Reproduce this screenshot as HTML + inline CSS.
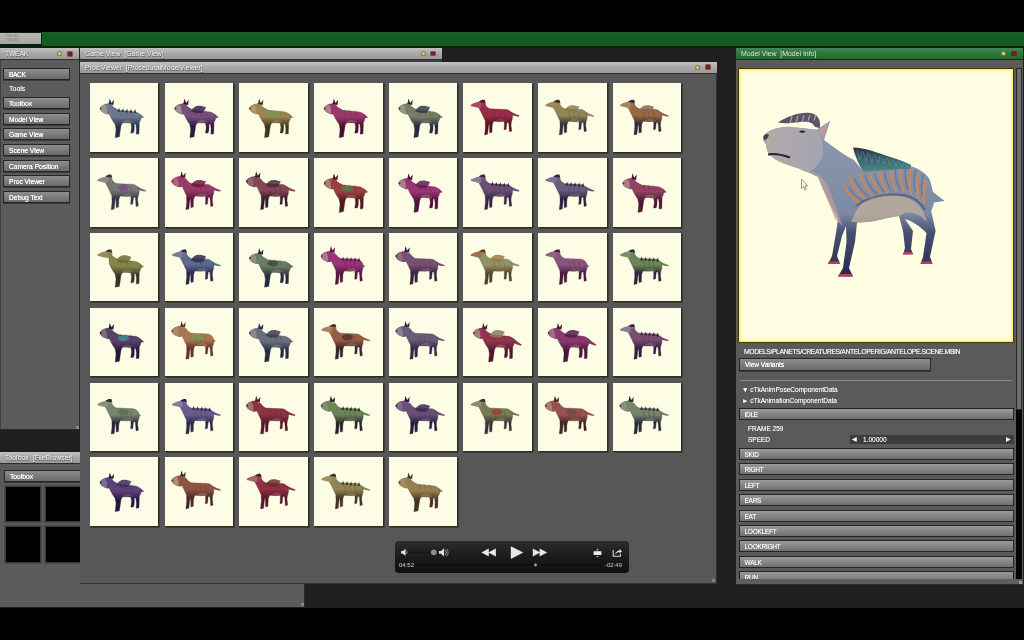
<!DOCTYPE html><html><head><meta charset="utf-8"><style>
*{margin:0;padding:0;box-sizing:border-box}
.hdr,.btn,.lbl,.bar,.tx{will-change:transform}
html,body{width:1024px;height:640px;overflow:hidden;background:#000}
body{position:relative;font-family:"Liberation Sans",sans-serif;}
.a{position:absolute}
.hdr{position:absolute;box-shadow:0 1px 0 #2e2e2e;background:linear-gradient(#c2c2c2,#a8a8a8 50%,#999);color:#fff;font-size:6.9px;line-height:11px;padding-left:5px;white-space:pre;overflow:hidden;text-shadow:0.4px 0.5px 0.6px #505050,0 0 1px #707070}
.panel{position:absolute;background:#5a5a5a}
.btn{position:absolute;background:linear-gradient(#8e8e8e,#6a6a6a);border:1px solid #262626;box-shadow:0 1px 0 #3a3a3a;color:#fff;font-size:6.7px;line-height:11.5px;padding-left:5px;text-shadow:0 0 0.6px #fff;white-space:nowrap;overflow:hidden}
.lbl{position:absolute;color:#fafafa;text-shadow:0 0 0.5px rgba(255,255,255,0.6);font-size:7px;line-height:9px;white-space:nowrap}
.th{position:absolute;width:68.6px;height:68.6px;background:#fdfde6;box-shadow:1px 1px 0 0.6px #2e2e28}
.dot{position:absolute;width:5px;height:5px;margin:-0.8px 0 0 0;border-radius:50%;background:radial-gradient(circle at 50% 50%,#f8f0a0,#a89040 50%,#5a4a22 85%);}
.sq{position:absolute;width:3.8px;height:3.8px;margin:0 0 0 0.2px;background:#901616;box-shadow:0 0 0 0.5px #4a0c0c}
.bar{position:absolute;left:738.5px;width:275px;height:12.3px;background:linear-gradient(#9a9a9a,#707070);border:1px solid #242424;color:#fff;font-size:6.5px;line-height:11px;padding-left:4.5px;text-shadow:0 0 0.5px rgba(255,255,255,0.6);letter-spacing:-0.25px;white-space:nowrap;overflow:hidden}
</style></head><body>
<div class="a" style="left:0;top:32px;width:1024px;height:575.5px;background:#1f1f1f"></div>
<div class="a" style="left:0;top:32px;width:1024px;height:15.5px;background:#0b1f0f"></div>
<div class="a" style="left:42.2px;top:31.9px;width:982px;height:14px;background:linear-gradient(#175f24,#145a20)"></div>
<div class="a" style="left:0.3px;top:32.7px;width:40.9px;height:11.4px;background:linear-gradient(#b8b8b8,#a6a3a3)"></div>
<div class="a tx" style="left:5px;top:34px;font-size:4px;line-height:4.2px;color:#8a8a8a">TWEAK<br>TWEAK</div>
<div class="panel" style="left:0;top:48px;width:78.5px;height:382.3px;background:#5b5b5b;border-bottom:1px solid #2a2a2a;border-left:1px solid #404040"></div>
<div class="hdr" style="left:0;top:48px;width:78.5px;height:10.7px;letter-spacing:-0.3px">TWEAK</div>
<div class="a" style="left:78.5px;top:48px;width:1.5px;height:382px;background:#262626"></div>
<div class="dot" style="left:57px;top:52px"></div><div class="sq" style="left:68px;top:52px"></div>
<div class="a" style="left:75.5px;top:426px;width:3px;height:3px;background:#8a8a8a"></div>
<div class="btn" style="left:3.2px;top:68px;width:66.5px;height:12.2px;letter-spacing:-0.4px">BACK</div>
<div class="lbl" style="left:8.5px;top:84px">Tools</div>
<div class="btn" style="left:3.2px;top:97.30px;width:66.5px;height:12.4px">Toolbox</div>
<div class="btn" style="left:3.2px;top:112.85px;width:66.5px;height:12.4px">Model View</div>
<div class="btn" style="left:3.2px;top:128.40px;width:66.5px;height:12.4px">Game View</div>
<div class="btn" style="left:3.2px;top:143.95px;width:66.5px;height:12.4px">Scene View</div>
<div class="btn" style="left:3.2px;top:159.50px;width:66.5px;height:12.4px">Camera Position</div>
<div class="btn" style="left:3.2px;top:175.05px;width:66.5px;height:12.4px">Proc Viewer</div>
<div class="btn" style="left:3.2px;top:190.60px;width:66.5px;height:12.4px">Debug Text</div>
<div class="panel" style="left:0;top:452.25px;width:305px;height:155px;background:#5b5b5b;border-right:1.5px solid #2a2a2a"></div>
<div class="hdr" style="left:0;top:452.25px;width:305px;height:10.9px">Toolbox  [FileBrowser]</div>
<div class="btn" style="left:3.75px;top:470px;width:300px;height:11.5px">Toolbox</div>
<div class="a" style="left:4.50px;top:485.60px;width:36.5px;height:36.5px;background:#000;border:1px solid #3c3c3c;box-shadow:0 0 0 1px #4a4a4a"></div>
<div class="a" style="left:45.30px;top:485.60px;width:36.5px;height:36.5px;background:#000;border:1px solid #3c3c3c;box-shadow:0 0 0 1px #4a4a4a"></div>
<div class="a" style="left:4.50px;top:526.10px;width:36.5px;height:36.5px;background:#000;border:1px solid #3c3c3c;box-shadow:0 0 0 1px #4a4a4a"></div>
<div class="a" style="left:45.30px;top:526.10px;width:36.5px;height:36.5px;background:#000;border:1px solid #3c3c3c;box-shadow:0 0 0 1px #4a4a4a"></div>
<div class="a" style="left:301px;top:603px;width:3px;height:3px;background:#888"></div>
<div class="panel" style="left:80px;top:48px;width:362px;height:14px;background:#3e3e3e"></div>
<div class="hdr" style="left:80px;top:47.8px;width:362px;height:11.2px">Game View  [Game View]</div>
<div class="dot" style="left:420.5px;top:51.7px"></div><div class="sq" style="left:431px;top:51.7px"></div>
<div class="panel" style="left:80px;top:62px;width:636.5px;height:521.75px;background:#575757;border-right:1px solid #333;border-bottom:1px solid #333"></div>
<div class="hdr" style="left:80px;top:62px;width:636.5px;height:10.7px">Proc Viewer  [ProceduralModelViewer]</div>
<div class="dot" style="left:695.2px;top:65.4px"></div><div class="sq" style="left:706px;top:65.4px"></div>
<div class="a" style="left:712px;top:579px;width:3px;height:3px;background:#888"></div>
<div class="th" style="left:89.90px;top:83.30px"></div>
<div class="th" style="left:164.58px;top:83.30px"></div>
<div class="th" style="left:239.26px;top:83.30px"></div>
<div class="th" style="left:313.94px;top:83.30px"></div>
<div class="th" style="left:388.62px;top:83.30px"></div>
<div class="th" style="left:463.30px;top:83.30px"></div>
<div class="th" style="left:537.98px;top:83.30px"></div>
<div class="th" style="left:612.66px;top:83.30px"></div>
<div class="th" style="left:89.90px;top:158.10px"></div>
<div class="th" style="left:164.58px;top:158.10px"></div>
<div class="th" style="left:239.26px;top:158.10px"></div>
<div class="th" style="left:313.94px;top:158.10px"></div>
<div class="th" style="left:388.62px;top:158.10px"></div>
<div class="th" style="left:463.30px;top:158.10px"></div>
<div class="th" style="left:537.98px;top:158.10px"></div>
<div class="th" style="left:612.66px;top:158.10px"></div>
<div class="th" style="left:89.90px;top:232.90px"></div>
<div class="th" style="left:164.58px;top:232.90px"></div>
<div class="th" style="left:239.26px;top:232.90px"></div>
<div class="th" style="left:313.94px;top:232.90px"></div>
<div class="th" style="left:388.62px;top:232.90px"></div>
<div class="th" style="left:463.30px;top:232.90px"></div>
<div class="th" style="left:537.98px;top:232.90px"></div>
<div class="th" style="left:612.66px;top:232.90px"></div>
<div class="th" style="left:89.90px;top:307.70px"></div>
<div class="th" style="left:164.58px;top:307.70px"></div>
<div class="th" style="left:239.26px;top:307.70px"></div>
<div class="th" style="left:313.94px;top:307.70px"></div>
<div class="th" style="left:388.62px;top:307.70px"></div>
<div class="th" style="left:463.30px;top:307.70px"></div>
<div class="th" style="left:537.98px;top:307.70px"></div>
<div class="th" style="left:612.66px;top:307.70px"></div>
<div class="th" style="left:89.90px;top:382.50px"></div>
<div class="th" style="left:164.58px;top:382.50px"></div>
<div class="th" style="left:239.26px;top:382.50px"></div>
<div class="th" style="left:313.94px;top:382.50px"></div>
<div class="th" style="left:388.62px;top:382.50px"></div>
<div class="th" style="left:463.30px;top:382.50px"></div>
<div class="th" style="left:537.98px;top:382.50px"></div>
<div class="th" style="left:612.66px;top:382.50px"></div>
<div class="th" style="left:89.90px;top:457.30px"></div>
<div class="th" style="left:164.58px;top:457.30px"></div>
<div class="th" style="left:239.26px;top:457.30px"></div>
<div class="th" style="left:313.94px;top:457.30px"></div>
<div class="th" style="left:388.62px;top:457.30px"></div>
<svg class="a" style="left:0;top:0" width="1024" height="640" viewBox="0 0 1024 640"><g transform="translate(90.40,83.30)"><defs><linearGradient id="g1" x1="0" y1="20" x2="0" y2="52" gradientUnits="userSpaceOnUse"><stop offset="0" stop-color="#6b788e"/><stop offset="0.42" stop-color="#6b788e"/><stop offset="0.72" stop-color="#272e4d"/><stop offset="1" stop-color="#272e4d"/></linearGradient></defs><path d="M49,30 L53.8,34.2 L50.2,35 Z" fill="#6b788e"/><path d="M18,20.5 C21,22 24,25 28.5,27 L45,28.6 C48.5,29.3 50.5,31.3 50.6,34 C50.6,36 50,37.5 49,39 L48.8,44 L48.6,50.5 L45.8,51 L46,45 L45.4,40.8 L44,40.8 L43.8,47 L43,49.8 L40.4,49.8 L41.2,44 L40.4,39.8 L33.5,39.4 C31.5,39.8 30.8,41 30.4,44 L29,53.5 L24.8,54.4 L25.6,46 L24.6,40.8 C22.5,38 20.5,35 19,31 Z" fill="url(#g1)" stroke="#272e4d" stroke-width="0.7" stroke-opacity="0.45"/><path d="M30.0,26.5 l1.5,6" stroke="#272e4d" stroke-width="1.3" opacity="0.18"/><path d="M35.0,26.5 l1.5,6" stroke="#272e4d" stroke-width="1.3" opacity="0.18"/><path d="M40.0,26.5 l1.5,6" stroke="#272e4d" stroke-width="1.3" opacity="0.18"/><path d="M27,28.3 L28.8,24.5 L29.6,28.5 Z" fill="#272e4d"/><path d="M31,28.6 L32.8,24.8 L33.6,28.8 Z" fill="#272e4d"/><path d="M35,28.900000000000002 L36.8,25.1 L37.6,29.1 Z" fill="#272e4d"/><path d="M39,29.2 L40.8,25.4 L41.6,29.4 Z" fill="#272e4d"/><path d="M43,29.5 L44.8,25.7 L45.6,29.7 Z" fill="#272e4d"/><path d="M31,39.3 C34,35.8 40,35.8 43,39.3 Z" fill="#a29785" opacity="0.45"/><g transform=""><path d="M9.5,25 C10,23 12.5,21.2 15.5,20.5 L19,20 C21.5,20.5 23,23 23,26 C22.5,29 20.5,31 18,31.2 C15.5,31 13,30 11.5,28.5 C10.2,27.5 9.5,26.3 9.5,25 Z" fill="#6b788e"/><path d="M9.5,25 C10,23 12.5,21.5 15,21.5 C16.5,24 17,27 16.5,30.6 C14.5,30.4 12.5,29.4 11.5,28.5 C10.2,27.5 9.5,26.3 9.5,25 Z" fill="#a29785"/><path d="M18.2,20.8 L19.4,15.2 L21,19.6 L23.6,16.4 L23,21.8 Z" fill="#272e4d"/><circle cx="10.3" cy="25.2" r="1" fill="#272e4d" opacity="0.8"/></g></g><g transform="translate(165.08,83.30)"><defs><linearGradient id="g2" x1="0" y1="20" x2="0" y2="52" gradientUnits="userSpaceOnUse"><stop offset="0" stop-color="#784f7a"/><stop offset="0.42" stop-color="#784f7a"/><stop offset="0.72" stop-color="#34173d"/><stop offset="1" stop-color="#34173d"/></linearGradient></defs><path d="M49,30 L53.8,34.2 L50.2,35 Z" fill="#784f7a"/><path d="M18,20.5 C21,22 24,25 28.5,27 L45,28.6 C48.5,29.3 50.5,31.3 50.6,34 C50.6,36 50,37.5 49,39 L48.8,44 L48.6,50.5 L45.8,51 L46,45 L45.4,40.8 L44,40.8 L43.8,47 L43,49.8 L40.4,49.8 L41.2,44 L40.4,39.8 L33.5,39.4 C31.5,39.8 30.8,41 30.4,44 L29,53.5 L24.8,54.4 L25.6,46 L24.6,40.8 C22.5,38 20.5,35 19,31 Z" fill="url(#g2)" stroke="#34173d" stroke-width="0.7" stroke-opacity="0.45"/><path d="M30.0,26.5 l1.5,6" stroke="#34173d" stroke-width="1.3" opacity="0.18"/><path d="M35.0,26.5 l1.5,6" stroke="#34173d" stroke-width="1.3" opacity="0.18"/><path d="M40.0,26.5 l1.5,6" stroke="#34173d" stroke-width="1.3" opacity="0.18"/><path d="M26,28 C28,22 34,21 41,24 L38,29.5 C34,30 30,30 26,28 Z" fill="#3a2048" opacity="0.85"/><path d="M31,39.3 C34,35.8 40,35.8 43,39.3 Z" fill="#9e9090" opacity="0.45"/><g transform=""><path d="M9.5,25 C10,23 12.5,21.2 15.5,20.5 L19,20 C21.5,20.5 23,23 23,26 C22.5,29 20.5,31 18,31.2 C15.5,31 13,30 11.5,28.5 C10.2,27.5 9.5,26.3 9.5,25 Z" fill="#784f7a"/><path d="M9.5,25 C10,23 12.5,21.5 15,21.5 C16.5,24 17,27 16.5,30.6 C14.5,30.4 12.5,29.4 11.5,28.5 C10.2,27.5 9.5,26.3 9.5,25 Z" fill="#9e9090"/><path d="M18.2,20.8 L19.4,15.2 L21,19.6 L23.6,16.4 L23,21.8 Z" fill="#34173d"/><circle cx="10.3" cy="25.2" r="1" fill="#34173d" opacity="0.8"/></g></g><g transform="translate(239.76,83.30)"><defs><linearGradient id="g3" x1="0" y1="20" x2="0" y2="52" gradientUnits="userSpaceOnUse"><stop offset="0" stop-color="#998654"/><stop offset="0.42" stop-color="#998654"/><stop offset="0.72" stop-color="#42341e"/><stop offset="1" stop-color="#42341e"/></linearGradient></defs><path d="M49,30 L53.8,34.2 L50.2,35 Z" fill="#998654"/><path d="M18,20.5 C21,22 24,25 28.5,27 L45,28.6 C48.5,29.3 50.5,31.3 50.6,34 C50.6,36 50,37.5 49,39 L48.8,44 L48.6,50.5 L45.8,51 L46,45 L45.4,40.8 L44,40.8 L43.8,47 L43,49.8 L40.4,49.8 L41.2,44 L40.4,39.8 L33.5,39.4 C31.5,39.8 30.8,41 30.4,44 L29,53.5 L24.8,54.4 L25.6,46 L24.6,40.8 C22.5,38 20.5,35 19,31 Z" fill="url(#g3)" stroke="#42341e" stroke-width="0.7" stroke-opacity="0.45"/><path d="M30.0,26.5 l1.5,6" stroke="#42341e" stroke-width="1.3" opacity="0.18"/><path d="M35.0,26.5 l1.5,6" stroke="#42341e" stroke-width="1.3" opacity="0.18"/><path d="M40.0,26.5 l1.5,6" stroke="#42341e" stroke-width="1.3" opacity="0.18"/><ellipse cx="33" cy="30.5" rx="5.5" ry="3" fill="#7a9a50" opacity="0.75"/><path d="M31,39.3 C34,35.8 40,35.8 43,39.3 Z" fill="#ac976c" opacity="0.45"/><g transform=""><path d="M9.5,25 C10,23 12.5,21.2 15.5,20.5 L19,20 C21.5,20.5 23,23 23,26 C22.5,29 20.5,31 18,31.2 C15.5,31 13,30 11.5,28.5 C10.2,27.5 9.5,26.3 9.5,25 Z" fill="#998654"/><path d="M9.5,25 C10,23 12.5,21.5 15,21.5 C16.5,24 17,27 16.5,30.6 C14.5,30.4 12.5,29.4 11.5,28.5 C10.2,27.5 9.5,26.3 9.5,25 Z" fill="#ac976c"/><path d="M18.2,20.8 L19.4,15.2 L21,19.6 L23.6,16.4 L23,21.8 Z" fill="#42341e"/><circle cx="10.3" cy="25.2" r="1" fill="#42341e" opacity="0.8"/></g></g><g transform="translate(314.44,83.30)"><defs><linearGradient id="g4" x1="0" y1="20" x2="0" y2="52" gradientUnits="userSpaceOnUse"><stop offset="0" stop-color="#99386a"/><stop offset="0.42" stop-color="#99386a"/><stop offset="0.72" stop-color="#49102d"/><stop offset="1" stop-color="#49102d"/></linearGradient></defs><path d="M49,30 L53.8,34.2 L50.2,35 Z" fill="#99386a"/><path d="M18,20.5 C21,22 24,25 28.5,27 L45,28.6 C48.5,29.3 50.5,31.3 50.6,34 C50.6,36 50,37.5 49,39 L48.8,44 L48.6,50.5 L45.8,51 L46,45 L45.4,40.8 L44,40.8 L43.8,47 L43,49.8 L40.4,49.8 L41.2,44 L40.4,39.8 L33.5,39.4 C31.5,39.8 30.8,41 30.4,44 L29,53.5 L24.8,54.4 L25.6,46 L24.6,40.8 C22.5,38 20.5,35 19,31 Z" fill="url(#g4)" stroke="#49102d" stroke-width="0.7" stroke-opacity="0.45"/><path d="M30.0,26.5 l1.5,6" stroke="#49102d" stroke-width="1.3" opacity="0.18"/><path d="M35.0,26.5 l1.5,6" stroke="#49102d" stroke-width="1.3" opacity="0.18"/><path d="M40.0,26.5 l1.5,6" stroke="#49102d" stroke-width="1.3" opacity="0.18"/><path d="M31,39.3 C34,35.8 40,35.8 43,39.3 Z" fill="#ac818a" opacity="0.45"/><g transform=""><path d="M9.5,25 C10,23 12.5,21.2 15.5,20.5 L19,20 C21.5,20.5 23,23 23,26 C22.5,29 20.5,31 18,31.2 C15.5,31 13,30 11.5,28.5 C10.2,27.5 9.5,26.3 9.5,25 Z" fill="#99386a"/><path d="M9.5,25 C10,23 12.5,21.5 15,21.5 C16.5,24 17,27 16.5,30.6 C14.5,30.4 12.5,29.4 11.5,28.5 C10.2,27.5 9.5,26.3 9.5,25 Z" fill="#ac818a"/><path d="M18.2,20.8 L19.4,15.2 L21,19.6 L23.6,16.4 L23,21.8 Z" fill="#49102d"/><circle cx="10.3" cy="25.2" r="1" fill="#49102d" opacity="0.8"/></g></g><g transform="translate(389.12,83.30)"><defs><linearGradient id="g5" x1="0" y1="20" x2="0" y2="52" gradientUnits="userSpaceOnUse"><stop offset="0" stop-color="#767d63"/><stop offset="0.42" stop-color="#767d63"/><stop offset="0.72" stop-color="#272b3d"/><stop offset="1" stop-color="#272b3d"/></linearGradient></defs><path d="M49,30 L53.8,34.2 L50.2,35 Z" fill="#767d63"/><path d="M18,20.5 C21,22 24,25 28.5,27 L45,28.6 C48.5,29.3 50.5,31.3 50.6,34 C50.6,36 50,37.5 49,39 L48.8,44 L48.6,50.5 L45.8,51 L46,45 L45.4,40.8 L44,40.8 L43.8,47 L43,49.8 L40.4,49.8 L41.2,44 L40.4,39.8 L33.5,39.4 C31.5,39.8 30.8,41 30.4,44 L29,53.5 L24.8,54.4 L25.6,46 L24.6,40.8 C22.5,38 20.5,35 19,31 Z" fill="url(#g5)" stroke="#272b3d" stroke-width="0.7" stroke-opacity="0.45"/><path d="M30.0,26.5 l1.5,6" stroke="#272b3d" stroke-width="1.3" opacity="0.18"/><path d="M35.0,26.5 l1.5,6" stroke="#272b3d" stroke-width="1.3" opacity="0.18"/><path d="M40.0,26.5 l1.5,6" stroke="#272b3d" stroke-width="1.3" opacity="0.18"/><path d="M26,28 C28,22 34,21 41,24 L38,29.5 C34,30 30,30 26,28 Z" fill="#303848" opacity="0.85"/><path d="M31,39.3 C34,35.8 40,35.8 43,39.3 Z" fill="#979781" opacity="0.45"/><g transform=""><path d="M9.5,25 C10,23 12.5,21.2 15.5,20.5 L19,20 C21.5,20.5 23,23 23,26 C22.5,29 20.5,31 18,31.2 C15.5,31 13,30 11.5,28.5 C10.2,27.5 9.5,26.3 9.5,25 Z" fill="#767d63"/><path d="M9.5,25 C10,23 12.5,21.5 15,21.5 C16.5,24 17,27 16.5,30.6 C14.5,30.4 12.5,29.4 11.5,28.5 C10.2,27.5 9.5,26.3 9.5,25 Z" fill="#979781"/><path d="M18.2,20.8 L19.4,15.2 L21,19.6 L23.6,16.4 L23,21.8 Z" fill="#272b3d"/><circle cx="10.3" cy="25.2" r="1" fill="#272b3d" opacity="0.8"/></g></g><g transform="translate(463.80,83.30)"><defs><linearGradient id="g6" x1="0" y1="20" x2="0" y2="49" gradientUnits="userSpaceOnUse"><stop offset="0" stop-color="#992c48"/><stop offset="0.42" stop-color="#992c48"/><stop offset="0.72" stop-color="#521220"/><stop offset="1" stop-color="#521220"/></linearGradient></defs><path d="M46,28 C49,29.5 52,31 55.6,32.2 L55.2,33.4 C51.5,33 48.5,32 46.5,31.8 Z" fill="#992c48"/><path d="M20,20 C22,22 23.5,24.5 26,25.5 L43,26.3 C46,26.8 48,29 48.6,32 C49,34.5 48.5,36.5 47.6,38.5 L47.2,42 L48,47.8 L45.6,48.4 L45.2,42.5 L44.8,39.2 L43.2,39.2 L42.8,42 L42.4,46 L40.2,46.4 L40.6,42 L40.4,38.2 C37,38.4 33,38.4 30,38 C29,39.5 28.5,41 28.4,43 L28.2,49 L25.8,49.6 L25.6,43.5 L25.4,39.6 L24.6,43.5 L23.8,51 L20.8,51.6 L21.6,44 L21.4,37.5 C19.8,34.5 17.5,29 15,24.5 Z" fill="url(#g6)" stroke="#521220" stroke-width="0.7" stroke-opacity="0.45"/><path d="M30.0,28.5 l1.5,6" stroke="#521220" stroke-width="1.3" opacity="0.18"/><path d="M35.0,28.5 l1.5,6" stroke="#521220" stroke-width="1.3" opacity="0.18"/><path d="M40.0,28.5 l1.5,6" stroke="#521220" stroke-width="1.3" opacity="0.18"/><path d="M31,38 C34,34.5 40,34.5 43,38 Z" fill="#ac4864" opacity="0.45"/><path d="M7,21.5 C9,20 12.5,18.8 16,18.3 L20.5,17.2 C22,18.5 22.5,20.5 21.5,23.5 C19.5,24.5 17,25 15,24.8 C12.5,24.2 10,23.6 7,22.8 Z" fill="#ac4864"/><path d="M15,18.4 C17,16.8 19,16.2 21,16.6 L21.6,19.6 C19.5,19.2 17,19 15,18.4 Z" fill="#521220"/><path d="M18,19.5 C21,20 22.5,21.5 21.5,24 C20,24.6 18.5,24.8 17,24.8 Z" fill="#992c48" opacity="0.85"/></g><g transform="translate(538.48,83.30)"><defs><linearGradient id="g7" x1="0" y1="20" x2="0" y2="49" gradientUnits="userSpaceOnUse"><stop offset="0" stop-color="#928654"/><stop offset="0.42" stop-color="#928654"/><stop offset="0.72" stop-color="#362e39"/><stop offset="1" stop-color="#362e39"/></linearGradient></defs><path d="M46,28 C49,29.5 52,31 55.6,32.2 L55.2,33.4 C51.5,33 48.5,32 46.5,31.8 Z" fill="#928654"/><path d="M20,20 C22,22 23.5,24.5 26,25.5 L43,26.3 C46,26.8 48,29 48.6,32 C49,34.5 48.5,36.5 47.6,38.5 L47.2,42 L48,47.8 L45.6,48.4 L45.2,42.5 L44.8,39.2 L43.2,39.2 L42.8,42 L42.4,46 L40.2,46.4 L40.6,42 L40.4,38.2 C37,38.4 33,38.4 30,38 C29,39.5 28.5,41 28.4,43 L28.2,49 L25.8,49.6 L25.6,43.5 L25.4,39.6 L24.6,43.5 L23.8,51 L20.8,51.6 L21.6,44 L21.4,37.5 C19.8,34.5 17.5,29 15,24.5 Z" fill="url(#g7)" stroke="#362e39" stroke-width="0.7" stroke-opacity="0.45"/><path d="M30.0,28.5 l1.5,6" stroke="#362e39" stroke-width="1.3" opacity="0.18"/><path d="M35.0,28.5 l1.5,6" stroke="#362e39" stroke-width="1.3" opacity="0.18"/><path d="M40.0,28.5 l1.5,6" stroke="#362e39" stroke-width="1.3" opacity="0.18"/><path d="M26,27.5 C28,21.5 34,20.5 41,23.5 L38,29.0 C34,29.5 30,29.5 26,27.5 Z" fill="#8a7a50" opacity="0.85"/><path d="M31,38 C34,34.5 40,34.5 43,38 Z" fill="#97885d" opacity="0.45"/><path d="M7,21.5 C9,20 12.5,18.8 16,18.3 L20.5,17.2 C22,18.5 22.5,20.5 21.5,23.5 C19.5,24.5 17,25 15,24.8 C12.5,24.2 10,23.6 7,22.8 Z" fill="#97885d"/><path d="M15,18.4 C17,16.8 19,16.2 21,16.6 L21.6,19.6 C19.5,19.2 17,19 15,18.4 Z" fill="#362e39"/><path d="M18,19.5 C21,20 22.5,21.5 21.5,24 C20,24.6 18.5,24.8 17,24.8 Z" fill="#928654" opacity="0.85"/></g><g transform="translate(613.16,83.30)"><defs><linearGradient id="g8" x1="0" y1="20" x2="0" y2="49" gradientUnits="userSpaceOnUse"><stop offset="0" stop-color="#996841"/><stop offset="0.42" stop-color="#996841"/><stop offset="0.72" stop-color="#342534"/><stop offset="1" stop-color="#342534"/></linearGradient></defs><path d="M46,28 C49,29.5 52,31 55.6,32.2 L55.2,33.4 C51.5,33 48.5,32 46.5,31.8 Z" fill="#996841"/><path d="M20,20 C22,22 23.5,24.5 26,25.5 L43,26.3 C46,26.8 48,29 48.6,32 C49,34.5 48.5,36.5 47.6,38.5 L47.2,42 L48,47.8 L45.6,48.4 L45.2,42.5 L44.8,39.2 L43.2,39.2 L42.8,42 L42.4,46 L40.2,46.4 L40.6,42 L40.4,38.2 C37,38.4 33,38.4 30,38 C29,39.5 28.5,41 28.4,43 L28.2,49 L25.8,49.6 L25.6,43.5 L25.4,39.6 L24.6,43.5 L23.8,51 L20.8,51.6 L21.6,44 L21.4,37.5 C19.8,34.5 17.5,29 15,24.5 Z" fill="url(#g8)" stroke="#342534" stroke-width="0.7" stroke-opacity="0.45"/><path d="M30.0,28.5 l1.5,6" stroke="#342534" stroke-width="1.3" opacity="0.18"/><path d="M35.0,28.5 l1.5,6" stroke="#342534" stroke-width="1.3" opacity="0.18"/><path d="M40.0,28.5 l1.5,6" stroke="#342534" stroke-width="1.3" opacity="0.18"/><path d="M26,27.5 C28,21.5 34,20.5 41,23.5 L38,29.0 C34,29.5 30,29.5 26,27.5 Z" fill="#8a6a50" opacity="0.85"/><path d="M31,38 C34,34.5 40,34.5 43,38 Z" fill="#a5815f" opacity="0.45"/><path d="M7,21.5 C9,20 12.5,18.8 16,18.3 L20.5,17.2 C22,18.5 22.5,20.5 21.5,23.5 C19.5,24.5 17,25 15,24.8 C12.5,24.2 10,23.6 7,22.8 Z" fill="#a5815f"/><path d="M15,18.4 C17,16.8 19,16.2 21,16.6 L21.6,19.6 C19.5,19.2 17,19 15,18.4 Z" fill="#342534"/><path d="M18,19.5 C21,20 22.5,21.5 21.5,24 C20,24.6 18.5,24.8 17,24.8 Z" fill="#996841" opacity="0.85"/></g><g transform="translate(90.40,158.10)"><defs><linearGradient id="g9" x1="0" y1="20" x2="0" y2="49" gradientUnits="userSpaceOnUse"><stop offset="0" stop-color="#767676"/><stop offset="0.42" stop-color="#767676"/><stop offset="0.72" stop-color="#343442"/><stop offset="1" stop-color="#343442"/></linearGradient></defs><path d="M46,28 C49,29.5 52,31 55.6,32.2 L55.2,33.4 C51.5,33 48.5,32 46.5,31.8 Z" fill="#767676"/><path d="M20,20 C22,22 23.5,24.5 26,25.5 L43,26.3 C46,26.8 48,29 48.6,32 C49,34.5 48.5,36.5 47.6,38.5 L47.2,42 L48,47.8 L45.6,48.4 L45.2,42.5 L44.8,39.2 L43.2,39.2 L42.8,42 L42.4,46 L40.2,46.4 L40.6,42 L40.4,38.2 C37,38.4 33,38.4 30,38 C29,39.5 28.5,41 28.4,43 L28.2,49 L25.8,49.6 L25.6,43.5 L25.4,39.6 L24.6,43.5 L23.8,51 L20.8,51.6 L21.6,44 L21.4,37.5 C19.8,34.5 17.5,29 15,24.5 Z" fill="url(#g9)" stroke="#343442" stroke-width="0.7" stroke-opacity="0.45"/><path d="M30.0,28.5 l1.5,6" stroke="#343442" stroke-width="1.3" opacity="0.18"/><path d="M35.0,28.5 l1.5,6" stroke="#343442" stroke-width="1.3" opacity="0.18"/><path d="M40.0,28.5 l1.5,6" stroke="#343442" stroke-width="1.3" opacity="0.18"/><ellipse cx="33" cy="29.5" rx="5.5" ry="3" fill="#7a4a8a" opacity="0.75"/><path d="M31,38 C34,34.5 40,34.5 43,38 Z" fill="#908a81" opacity="0.45"/><path d="M7,21.5 C9,20 12.5,18.8 16,18.3 L20.5,17.2 C22,18.5 22.5,20.5 21.5,23.5 C19.5,24.5 17,25 15,24.8 C12.5,24.2 10,23.6 7,22.8 Z" fill="#908a81"/><path d="M15,18.4 C17,16.8 19,16.2 21,16.6 L21.6,19.6 C19.5,19.2 17,19 15,18.4 Z" fill="#343442"/><path d="M18,19.5 C21,20 22.5,21.5 21.5,24 C20,24.6 18.5,24.8 17,24.8 Z" fill="#767676" opacity="0.85"/></g><g transform="translate(165.08,158.10)"><defs><linearGradient id="g10" x1="0" y1="20" x2="0" y2="49" gradientUnits="userSpaceOnUse"><stop offset="0" stop-color="#993a68"/><stop offset="0.42" stop-color="#993a68"/><stop offset="0.72" stop-color="#561539"/><stop offset="1" stop-color="#561539"/></linearGradient></defs><path d="M46,28 C49,29.5 52,31 55.6,32.2 L55.2,33.4 C51.5,33 48.5,32 46.5,31.8 Z" fill="#993a68"/><path d="M20,20 C22,22 23.5,24.5 26,25.5 L43,26.3 C46,26.8 48,29 48.6,32 C49,34.5 48.5,36.5 47.6,38.5 L47.2,42 L48,47.8 L45.6,48.4 L45.2,42.5 L44.8,39.2 L43.2,39.2 L42.8,42 L42.4,46 L40.2,46.4 L40.6,42 L40.4,38.2 C37,38.4 33,38.4 30,38 C29,39.5 28.5,41 28.4,43 L28.2,49 L25.8,49.6 L25.6,43.5 L25.4,39.6 L24.6,43.5 L23.8,51 L20.8,51.6 L21.6,44 L21.4,37.5 C19.8,34.5 17.5,29 15,24.5 Z" fill="url(#g10)" stroke="#561539" stroke-width="0.7" stroke-opacity="0.45"/><path d="M30.0,28.5 l1.5,6" stroke="#561539" stroke-width="1.3" opacity="0.18"/><path d="M35.0,28.5 l1.5,6" stroke="#561539" stroke-width="1.3" opacity="0.18"/><path d="M40.0,28.5 l1.5,6" stroke="#561539" stroke-width="1.3" opacity="0.18"/><path d="M26,27.5 C28,21.5 34,20.5 41,23.5 L38,29.0 C34,29.5 30,29.5 26,27.5 Z" fill="#701a40" opacity="0.85"/><path d="M31,38 C34,34.5 40,34.5 43,38 Z" fill="#ac6481" opacity="0.45"/><g transform="translate(-3,-2)"><path d="M9.5,25 C10,23 12.5,21.2 15.5,20.5 L19,20 C21.5,20.5 23,23 23,26 C22.5,29 20.5,31 18,31.2 C15.5,31 13,30 11.5,28.5 C10.2,27.5 9.5,26.3 9.5,25 Z" fill="#993a68"/><path d="M9.5,25 C10,23 12.5,21.5 15,21.5 C16.5,24 17,27 16.5,30.6 C14.5,30.4 12.5,29.4 11.5,28.5 C10.2,27.5 9.5,26.3 9.5,25 Z" fill="#ac6481"/><path d="M18.2,20.8 L19.4,15.2 L21,19.6 L23.6,16.4 L23,21.8 Z" fill="#561539"/><circle cx="10.3" cy="25.2" r="1" fill="#561539" opacity="0.8"/></g></g><g transform="translate(239.76,158.10)"><defs><linearGradient id="g11" x1="0" y1="20" x2="0" y2="49" gradientUnits="userSpaceOnUse"><stop offset="0" stop-color="#864656"/><stop offset="0.42" stop-color="#864656"/><stop offset="0.72" stop-color="#341c2b"/><stop offset="1" stop-color="#341c2b"/></linearGradient></defs><path d="M46,28 C49,29.5 52,31 55.6,32.2 L55.2,33.4 C51.5,33 48.5,32 46.5,31.8 Z" fill="#864656"/><path d="M20,20 C22,22 23.5,24.5 26,25.5 L43,26.3 C46,26.8 48,29 48.6,32 C49,34.5 48.5,36.5 47.6,38.5 L47.2,42 L48,47.8 L45.6,48.4 L45.2,42.5 L44.8,39.2 L43.2,39.2 L42.8,42 L42.4,46 L40.2,46.4 L40.6,42 L40.4,38.2 C37,38.4 33,38.4 30,38 C29,39.5 28.5,41 28.4,43 L28.2,49 L25.8,49.6 L25.6,43.5 L25.4,39.6 L24.6,43.5 L23.8,51 L20.8,51.6 L21.6,44 L21.4,37.5 C19.8,34.5 17.5,29 15,24.5 Z" fill="url(#g11)" stroke="#341c2b" stroke-width="0.7" stroke-opacity="0.45"/><path d="M30.0,28.5 l1.5,6" stroke="#341c2b" stroke-width="1.3" opacity="0.18"/><path d="M35.0,28.5 l1.5,6" stroke="#341c2b" stroke-width="1.3" opacity="0.18"/><path d="M40.0,28.5 l1.5,6" stroke="#341c2b" stroke-width="1.3" opacity="0.18"/><path d="M26,27.5 C28,21.5 34,20.5 41,23.5 L38,29.0 C34,29.5 30,29.5 26,27.5 Z" fill="#4a2a3a" opacity="0.85"/><path d="M31,38 C34,34.5 40,34.5 43,38 Z" fill="#906473" opacity="0.45"/><g transform="translate(-3,-2)"><path d="M9.5,25 C10,23 12.5,21.2 15.5,20.5 L19,20 C21.5,20.5 23,23 23,26 C22.5,29 20.5,31 18,31.2 C15.5,31 13,30 11.5,28.5 C10.2,27.5 9.5,26.3 9.5,25 Z" fill="#864656"/><path d="M9.5,25 C10,23 12.5,21.5 15,21.5 C16.5,24 17,27 16.5,30.6 C14.5,30.4 12.5,29.4 11.5,28.5 C10.2,27.5 9.5,26.3 9.5,25 Z" fill="#906473"/><path d="M18.2,20.8 L19.4,15.2 L21,19.6 L23.6,16.4 L23,21.8 Z" fill="#341c2b"/><circle cx="10.3" cy="25.2" r="1" fill="#341c2b" opacity="0.8"/></g></g><g transform="translate(314.44,158.10)"><defs><linearGradient id="g12" x1="0" y1="20" x2="0" y2="52" gradientUnits="userSpaceOnUse"><stop offset="0" stop-color="#994141"/><stop offset="0.42" stop-color="#994141"/><stop offset="0.72" stop-color="#4f1720"/><stop offset="1" stop-color="#4f1720"/></linearGradient></defs><path d="M49,30 L53.8,34.2 L50.2,35 Z" fill="#994141"/><path d="M18,20.5 C21,22 24,25 28.5,27 L45,28.6 C48.5,29.3 50.5,31.3 50.6,34 C50.6,36 50,37.5 49,39 L48.8,44 L48.6,50.5 L45.8,51 L46,45 L45.4,40.8 L44,40.8 L43.8,47 L43,49.8 L40.4,49.8 L41.2,44 L40.4,39.8 L33.5,39.4 C31.5,39.8 30.8,41 30.4,44 L29,53.5 L24.8,54.4 L25.6,46 L24.6,40.8 C22.5,38 20.5,35 19,31 Z" fill="url(#g12)" stroke="#4f1720" stroke-width="0.7" stroke-opacity="0.45"/><path d="M30.0,26.5 l1.5,6" stroke="#4f1720" stroke-width="1.3" opacity="0.18"/><path d="M35.0,26.5 l1.5,6" stroke="#4f1720" stroke-width="1.3" opacity="0.18"/><path d="M40.0,26.5 l1.5,6" stroke="#4f1720" stroke-width="1.3" opacity="0.18"/><ellipse cx="33" cy="30.5" rx="5.5" ry="3" fill="#4a8a4a" opacity="0.75"/><path d="M31,39.3 C34,35.8 40,35.8 43,39.3 Z" fill="#a58173" opacity="0.45"/><g transform=""><path d="M9.5,25 C10,23 12.5,21.2 15.5,20.5 L19,20 C21.5,20.5 23,23 23,26 C22.5,29 20.5,31 18,31.2 C15.5,31 13,30 11.5,28.5 C10.2,27.5 9.5,26.3 9.5,25 Z" fill="#994141"/><path d="M9.5,25 C10,23 12.5,21.5 15,21.5 C16.5,24 17,27 16.5,30.6 C14.5,30.4 12.5,29.4 11.5,28.5 C10.2,27.5 9.5,26.3 9.5,25 Z" fill="#a58173"/><path d="M18.2,20.8 L19.4,15.2 L21,19.6 L23.6,16.4 L23,21.8 Z" fill="#4f1720"/><circle cx="10.3" cy="25.2" r="1" fill="#4f1720" opacity="0.8"/></g></g><g transform="translate(389.12,158.10)"><defs><linearGradient id="g13" x1="0" y1="20" x2="0" y2="52" gradientUnits="userSpaceOnUse"><stop offset="0" stop-color="#993371"/><stop offset="0.42" stop-color="#993371"/><stop offset="0.72" stop-color="#511339"/><stop offset="1" stop-color="#511339"/></linearGradient></defs><path d="M49,30 L53.8,34.2 L50.2,35 Z" fill="#993371"/><path d="M18,20.5 C21,22 24,25 28.5,27 L45,28.6 C48.5,29.3 50.5,31.3 50.6,34 C50.6,36 50,37.5 49,39 L48.8,44 L48.6,50.5 L45.8,51 L46,45 L45.4,40.8 L44,40.8 L43.8,47 L43,49.8 L40.4,49.8 L41.2,44 L40.4,39.8 L33.5,39.4 C31.5,39.8 30.8,41 30.4,44 L29,53.5 L24.8,54.4 L25.6,46 L24.6,40.8 C22.5,38 20.5,35 19,31 Z" fill="url(#g13)" stroke="#511339" stroke-width="0.7" stroke-opacity="0.45"/><path d="M30.0,26.5 l1.5,6" stroke="#511339" stroke-width="1.3" opacity="0.18"/><path d="M35.0,26.5 l1.5,6" stroke="#511339" stroke-width="1.3" opacity="0.18"/><path d="M40.0,26.5 l1.5,6" stroke="#511339" stroke-width="1.3" opacity="0.18"/><path d="M26,28 C28,22 34,21 41,24 L38,29.5 C34,30 30,30 26,28 Z" fill="#601a50" opacity="0.85"/><path d="M31,39.3 C34,35.8 40,35.8 43,39.3 Z" fill="#a58188" opacity="0.45"/><g transform=""><path d="M9.5,25 C10,23 12.5,21.2 15.5,20.5 L19,20 C21.5,20.5 23,23 23,26 C22.5,29 20.5,31 18,31.2 C15.5,31 13,30 11.5,28.5 C10.2,27.5 9.5,26.3 9.5,25 Z" fill="#993371"/><path d="M9.5,25 C10,23 12.5,21.5 15,21.5 C16.5,24 17,27 16.5,30.6 C14.5,30.4 12.5,29.4 11.5,28.5 C10.2,27.5 9.5,26.3 9.5,25 Z" fill="#a58188"/><path d="M18.2,20.8 L19.4,15.2 L21,19.6 L23.6,16.4 L23,21.8 Z" fill="#511339"/><circle cx="10.3" cy="25.2" r="1" fill="#511339" opacity="0.8"/></g></g><g transform="translate(463.80,158.10)"><defs><linearGradient id="g14" x1="0" y1="20" x2="0" y2="49" gradientUnits="userSpaceOnUse"><stop offset="0" stop-color="#6a4f78"/><stop offset="0.42" stop-color="#6a4f78"/><stop offset="0.72" stop-color="#342544"/><stop offset="1" stop-color="#342544"/></linearGradient></defs><path d="M46,28 C49,29.5 52,31 55.6,32.2 L55.2,33.4 C51.5,33 48.5,32 46.5,31.8 Z" fill="#6a4f78"/><path d="M20,20 C22,22 23.5,24.5 26,25.5 L43,26.3 C46,26.8 48,29 48.6,32 C49,34.5 48.5,36.5 47.6,38.5 L47.2,42 L48,47.8 L45.6,48.4 L45.2,42.5 L44.8,39.2 L43.2,39.2 L42.8,42 L42.4,46 L40.2,46.4 L40.6,42 L40.4,38.2 C37,38.4 33,38.4 30,38 C29,39.5 28.5,41 28.4,43 L28.2,49 L25.8,49.6 L25.6,43.5 L25.4,39.6 L24.6,43.5 L23.8,51 L20.8,51.6 L21.6,44 L21.4,37.5 C19.8,34.5 17.5,29 15,24.5 Z" fill="url(#g14)" stroke="#342544" stroke-width="0.7" stroke-opacity="0.45"/><path d="M30.0,28.5 l1.5,6" stroke="#342544" stroke-width="1.3" opacity="0.18"/><path d="M35.0,28.5 l1.5,6" stroke="#342544" stroke-width="1.3" opacity="0.18"/><path d="M40.0,28.5 l1.5,6" stroke="#342544" stroke-width="1.3" opacity="0.18"/><path d="M27,27.3 L28.8,23.5 L29.6,27.5 Z" fill="#342544"/><path d="M31,27.6 L32.8,23.8 L33.6,27.8 Z" fill="#342544"/><path d="M35,27.900000000000002 L36.8,24.1 L37.6,28.1 Z" fill="#342544"/><path d="M39,28.2 L40.8,24.4 L41.6,28.4 Z" fill="#342544"/><path d="M43,28.5 L44.8,24.7 L45.6,28.7 Z" fill="#342544"/><path d="M31,38 C34,34.5 40,34.5 43,38 Z" fill="#8a7c90" opacity="0.45"/><path d="M7,21.5 C9,20 12.5,18.8 16,18.3 L20.5,17.2 C22,18.5 22.5,20.5 21.5,23.5 C19.5,24.5 17,25 15,24.8 C12.5,24.2 10,23.6 7,22.8 Z" fill="#8a7c90"/><path d="M15,18.4 C17,16.8 19,16.2 21,16.6 L21.6,19.6 C19.5,19.2 17,19 15,18.4 Z" fill="#342544"/><path d="M18,19.5 C21,20 22.5,21.5 21.5,24 C20,24.6 18.5,24.8 17,24.8 Z" fill="#6a4f78" opacity="0.85"/></g><g transform="translate(538.48,158.10)"><defs><linearGradient id="g15" x1="0" y1="20" x2="0" y2="49" gradientUnits="userSpaceOnUse"><stop offset="0" stop-color="#6a5c7d"/><stop offset="0.42" stop-color="#6a5c7d"/><stop offset="0.72" stop-color="#2e243f"/><stop offset="1" stop-color="#2e243f"/></linearGradient></defs><path d="M46,28 C49,29.5 52,31 55.6,32.2 L55.2,33.4 C51.5,33 48.5,32 46.5,31.8 Z" fill="#6a5c7d"/><path d="M20,20 C22,22 23.5,24.5 26,25.5 L43,26.3 C46,26.8 48,29 48.6,32 C49,34.5 48.5,36.5 47.6,38.5 L47.2,42 L48,47.8 L45.6,48.4 L45.2,42.5 L44.8,39.2 L43.2,39.2 L42.8,42 L42.4,46 L40.2,46.4 L40.6,42 L40.4,38.2 C37,38.4 33,38.4 30,38 C29,39.5 28.5,41 28.4,43 L28.2,49 L25.8,49.6 L25.6,43.5 L25.4,39.6 L24.6,43.5 L23.8,51 L20.8,51.6 L21.6,44 L21.4,37.5 C19.8,34.5 17.5,29 15,24.5 Z" fill="url(#g15)" stroke="#2e243f" stroke-width="0.7" stroke-opacity="0.45"/><path d="M30.0,28.5 l1.5,6" stroke="#2e243f" stroke-width="1.3" opacity="0.18"/><path d="M35.0,28.5 l1.5,6" stroke="#2e243f" stroke-width="1.3" opacity="0.18"/><path d="M40.0,28.5 l1.5,6" stroke="#2e243f" stroke-width="1.3" opacity="0.18"/><path d="M27,27.3 L28.8,23.5 L29.6,27.5 Z" fill="#2e243f"/><path d="M31,27.6 L32.8,23.8 L33.6,27.8 Z" fill="#2e243f"/><path d="M35,27.900000000000002 L36.8,24.1 L37.6,28.1 Z" fill="#2e243f"/><path d="M39,28.2 L40.8,24.4 L41.6,28.4 Z" fill="#2e243f"/><path d="M43,28.5 L44.8,24.7 L45.6,28.7 Z" fill="#2e243f"/><path d="M31,38 C34,34.5 40,34.5 43,38 Z" fill="#7c7390" opacity="0.45"/><path d="M7,21.5 C9,20 12.5,18.8 16,18.3 L20.5,17.2 C22,18.5 22.5,20.5 21.5,23.5 C19.5,24.5 17,25 15,24.8 C12.5,24.2 10,23.6 7,22.8 Z" fill="#7c7390"/><path d="M15,18.4 C17,16.8 19,16.2 21,16.6 L21.6,19.6 C19.5,19.2 17,19 15,18.4 Z" fill="#2e243f"/><path d="M18,19.5 C21,20 22.5,21.5 21.5,24 C20,24.6 18.5,24.8 17,24.8 Z" fill="#6a5c7d" opacity="0.85"/></g><g transform="translate(613.16,158.10)"><defs><linearGradient id="g16" x1="0" y1="20" x2="0" y2="52" gradientUnits="userSpaceOnUse"><stop offset="0" stop-color="#924162"/><stop offset="0.42" stop-color="#924162"/><stop offset="0.72" stop-color="#4f1732"/><stop offset="1" stop-color="#4f1732"/></linearGradient></defs><path d="M49,30 L53.8,34.2 L50.2,35 Z" fill="#924162"/><path d="M18,20.5 C21,22 24,25 28.5,27 L45,28.6 C48.5,29.3 50.5,31.3 50.6,34 C50.6,36 50,37.5 49,39 L48.8,44 L48.6,50.5 L45.8,51 L46,45 L45.4,40.8 L44,40.8 L43.8,47 L43,49.8 L40.4,49.8 L41.2,44 L40.4,39.8 L33.5,39.4 C31.5,39.8 30.8,41 30.4,44 L29,53.5 L24.8,54.4 L25.6,46 L24.6,40.8 C22.5,38 20.5,35 19,31 Z" fill="url(#g16)" stroke="#4f1732" stroke-width="0.7" stroke-opacity="0.45"/><path d="M30.0,26.5 l1.5,6" stroke="#4f1732" stroke-width="1.3" opacity="0.18"/><path d="M35.0,26.5 l1.5,6" stroke="#4f1732" stroke-width="1.3" opacity="0.18"/><path d="M40.0,26.5 l1.5,6" stroke="#4f1732" stroke-width="1.3" opacity="0.18"/><path d="M31,39.3 C34,35.8 40,35.8 43,39.3 Z" fill="#a58188" opacity="0.45"/><g transform=""><path d="M9.5,25 C10,23 12.5,21.2 15.5,20.5 L19,20 C21.5,20.5 23,23 23,26 C22.5,29 20.5,31 18,31.2 C15.5,31 13,30 11.5,28.5 C10.2,27.5 9.5,26.3 9.5,25 Z" fill="#924162"/><path d="M9.5,25 C10,23 12.5,21.5 15,21.5 C16.5,24 17,27 16.5,30.6 C14.5,30.4 12.5,29.4 11.5,28.5 C10.2,27.5 9.5,26.3 9.5,25 Z" fill="#a58188"/><path d="M18.2,20.8 L19.4,15.2 L21,19.6 L23.6,16.4 L23,21.8 Z" fill="#4f1732"/><circle cx="10.3" cy="25.2" r="1" fill="#4f1732" opacity="0.8"/></g></g><g transform="translate(90.40,232.90)"><defs><linearGradient id="g17" x1="0" y1="20" x2="0" y2="52" gradientUnits="userSpaceOnUse"><stop offset="0" stop-color="#868446"/><stop offset="0.42" stop-color="#868446"/><stop offset="0.72" stop-color="#343425"/><stop offset="1" stop-color="#343425"/></linearGradient></defs><path d="M49,30 L53.8,34.2 L50.2,35 Z" fill="#868446"/><path d="M18,20.5 C21,22 24,25 28.5,27 L45,28.6 C48.5,29.3 50.5,31.3 50.6,34 C50.6,36 50,37.5 49,39 L48.8,44 L48.6,50.5 L45.8,51 L46,45 L45.4,40.8 L44,40.8 L43.8,47 L43,49.8 L40.4,49.8 L41.2,44 L40.4,39.8 L33.5,39.4 C31.5,39.8 30.8,41 30.4,44 L29,53.5 L24.8,54.4 L25.6,46 L24.6,40.8 C22.5,38 20.5,35 19,31 Z" fill="url(#g17)" stroke="#343425" stroke-width="0.7" stroke-opacity="0.45"/><path d="M30.0,26.5 l1.5,6" stroke="#343425" stroke-width="1.3" opacity="0.18"/><path d="M35.0,26.5 l1.5,6" stroke="#343425" stroke-width="1.3" opacity="0.18"/><path d="M40.0,26.5 l1.5,6" stroke="#343425" stroke-width="1.3" opacity="0.18"/><path d="M26,28 C28,22 34,21 41,24 L38,29.5 C34,30 30,30 26,28 Z" fill="#6a6a3a" opacity="0.85"/><path d="M31,39.3 C34,35.8 40,35.8 43,39.3 Z" fill="#978a64" opacity="0.45"/><path d="M7,21.5 C9,20 12.5,18.8 16,18.3 L20.5,17.2 C22,18.5 22.5,20.5 21.5,23.5 C19.5,24.5 17,25 15,24.8 C12.5,24.2 10,23.6 7,22.8 Z" fill="#978a64"/><path d="M15,18.4 C17,16.8 19,16.2 21,16.6 L21.6,19.6 C19.5,19.2 17,19 15,18.4 Z" fill="#343425"/><path d="M18,19.5 C21,20 22.5,21.5 21.5,24 C20,24.6 18.5,24.8 17,24.8 Z" fill="#868446" opacity="0.85"/></g><g transform="translate(165.08,232.90)"><defs><linearGradient id="g18" x1="0" y1="20" x2="0" y2="49" gradientUnits="userSpaceOnUse"><stop offset="0" stop-color="#5c6a8b"/><stop offset="0.42" stop-color="#5c6a8b"/><stop offset="0.72" stop-color="#252548"/><stop offset="1" stop-color="#252548"/></linearGradient></defs><path d="M46,28 C49,29.5 52,31 55.6,32.2 L55.2,33.4 C51.5,33 48.5,32 46.5,31.8 Z" fill="#5c6a8b"/><path d="M20,20 C22,22 23.5,24.5 26,25.5 L43,26.3 C46,26.8 48,29 48.6,32 C49,34.5 48.5,36.5 47.6,38.5 L47.2,42 L48,47.8 L45.6,48.4 L45.2,42.5 L44.8,39.2 L43.2,39.2 L42.8,42 L42.4,46 L40.2,46.4 L40.6,42 L40.4,38.2 C37,38.4 33,38.4 30,38 C29,39.5 28.5,41 28.4,43 L28.2,49 L25.8,49.6 L25.6,43.5 L25.4,39.6 L24.6,43.5 L23.8,51 L20.8,51.6 L21.6,44 L21.4,37.5 C19.8,34.5 17.5,29 15,24.5 Z" fill="url(#g18)" stroke="#252548" stroke-width="0.7" stroke-opacity="0.45"/><path d="M30.0,28.5 l1.5,6" stroke="#252548" stroke-width="1.3" opacity="0.18"/><path d="M35.0,28.5 l1.5,6" stroke="#252548" stroke-width="1.3" opacity="0.18"/><path d="M40.0,28.5 l1.5,6" stroke="#252548" stroke-width="1.3" opacity="0.18"/><path d="M26,27.5 C28,21.5 34,20.5 41,23.5 L38,29.0 C34,29.5 30,29.5 26,27.5 Z" fill="#2a2a50" opacity="0.85"/><path d="M31,38 C34,34.5 40,34.5 43,38 Z" fill="#7c7c97" opacity="0.45"/><path d="M7,21.5 C9,20 12.5,18.8 16,18.3 L20.5,17.2 C22,18.5 22.5,20.5 21.5,23.5 C19.5,24.5 17,25 15,24.8 C12.5,24.2 10,23.6 7,22.8 Z" fill="#7c7c97"/><path d="M15,18.4 C17,16.8 19,16.2 21,16.6 L21.6,19.6 C19.5,19.2 17,19 15,18.4 Z" fill="#252548"/><path d="M18,19.5 C21,20 22.5,21.5 21.5,24 C20,24.6 18.5,24.8 17,24.8 Z" fill="#5c6a8b" opacity="0.85"/></g><g transform="translate(239.76,232.90)"><defs><linearGradient id="g19" x1="0" y1="20" x2="0" y2="52" gradientUnits="userSpaceOnUse"><stop offset="0" stop-color="#6a7d62"/><stop offset="0.42" stop-color="#6a7d62"/><stop offset="0.72" stop-color="#252b39"/><stop offset="1" stop-color="#252b39"/></linearGradient></defs><path d="M49,30 L53.8,34.2 L50.2,35 Z" fill="#6a7d62"/><path d="M18,20.5 C21,22 24,25 28.5,27 L45,28.6 C48.5,29.3 50.5,31.3 50.6,34 C50.6,36 50,37.5 49,39 L48.8,44 L48.6,50.5 L45.8,51 L46,45 L45.4,40.8 L44,40.8 L43.8,47 L43,49.8 L40.4,49.8 L41.2,44 L40.4,39.8 L33.5,39.4 C31.5,39.8 30.8,41 30.4,44 L29,53.5 L24.8,54.4 L25.6,46 L24.6,40.8 C22.5,38 20.5,35 19,31 Z" fill="url(#g19)" stroke="#252b39" stroke-width="0.7" stroke-opacity="0.45"/><path d="M30.0,26.5 l1.5,6" stroke="#252b39" stroke-width="1.3" opacity="0.18"/><path d="M35.0,26.5 l1.5,6" stroke="#252b39" stroke-width="1.3" opacity="0.18"/><path d="M40.0,26.5 l1.5,6" stroke="#252b39" stroke-width="1.3" opacity="0.18"/><ellipse cx="33" cy="30.5" rx="5.5" ry="3" fill="#3a4a3a" opacity="0.75"/><path d="M31,39.3 C34,35.8 40,35.8 43,39.3 Z" fill="#909081" opacity="0.45"/><g transform=""><path d="M9.5,25 C10,23 12.5,21.2 15.5,20.5 L19,20 C21.5,20.5 23,23 23,26 C22.5,29 20.5,31 18,31.2 C15.5,31 13,30 11.5,28.5 C10.2,27.5 9.5,26.3 9.5,25 Z" fill="#6a7d62"/><path d="M9.5,25 C10,23 12.5,21.5 15,21.5 C16.5,24 17,27 16.5,30.6 C14.5,30.4 12.5,29.4 11.5,28.5 C10.2,27.5 9.5,26.3 9.5,25 Z" fill="#909081"/><path d="M18.2,20.8 L19.4,15.2 L21,19.6 L23.6,16.4 L23,21.8 Z" fill="#252b39"/><circle cx="10.3" cy="25.2" r="1" fill="#252b39" opacity="0.8"/></g></g><g transform="translate(314.44,232.90)"><defs><linearGradient id="g20" x1="0" y1="20" x2="0" y2="49" gradientUnits="userSpaceOnUse"><stop offset="0" stop-color="#993378"/><stop offset="0.42" stop-color="#993378"/><stop offset="0.72" stop-color="#511740"/><stop offset="1" stop-color="#511740"/></linearGradient></defs><path d="M46.5,30 L51,33.5 L47.8,34.2 Z" fill="#993378"/><path d="M20,20 C22,22 23.5,24.5 26,25.5 L43,26.3 C46,26.8 48,29 48.6,32 C49,34.5 48.5,36.5 47.6,38.5 L47.2,42 L48,47.8 L45.6,48.4 L45.2,42.5 L44.8,39.2 L43.2,39.2 L42.8,42 L42.4,46 L40.2,46.4 L40.6,42 L40.4,38.2 C37,38.4 33,38.4 30,38 C29,39.5 28.5,41 28.4,43 L28.2,49 L25.8,49.6 L25.6,43.5 L25.4,39.6 L24.6,43.5 L23.8,51 L20.8,51.6 L21.6,44 L21.4,37.5 C19.8,34.5 17.5,29 15,24.5 Z" fill="url(#g20)" stroke="#511740" stroke-width="0.7" stroke-opacity="0.45"/><path d="M30.0,28.5 l1.5,6" stroke="#511740" stroke-width="1.3" opacity="0.18"/><path d="M35.0,28.5 l1.5,6" stroke="#511740" stroke-width="1.3" opacity="0.18"/><path d="M40.0,28.5 l1.5,6" stroke="#511740" stroke-width="1.3" opacity="0.18"/><path d="M27,27.3 L28.8,23.5 L29.6,27.5 Z" fill="#511740"/><path d="M31,27.6 L32.8,23.8 L33.6,27.8 Z" fill="#511740"/><path d="M35,27.900000000000002 L36.8,24.1 L37.6,28.1 Z" fill="#511740"/><path d="M39,28.2 L40.8,24.4 L41.6,28.4 Z" fill="#511740"/><path d="M43,28.5 L44.8,24.7 L45.6,28.7 Z" fill="#511740"/><path d="M31,38 C34,34.5 40,34.5 43,38 Z" fill="#a57c90" opacity="0.45"/><g transform="translate(-3,-2)"><path d="M9.5,25 C10,23 12.5,21.2 15.5,20.5 L19,20 C21.5,20.5 23,23 23,26 C22.5,29 20.5,31 18,31.2 C15.5,31 13,30 11.5,28.5 C10.2,27.5 9.5,26.3 9.5,25 Z" fill="#993378"/><path d="M9.5,25 C10,23 12.5,21.5 15,21.5 C16.5,24 17,27 16.5,30.6 C14.5,30.4 12.5,29.4 11.5,28.5 C10.2,27.5 9.5,26.3 9.5,25 Z" fill="#a57c90"/><path d="M18.2,20.8 L19.4,15.2 L21,19.6 L23.6,16.4 L23,21.8 Z" fill="#511740"/><circle cx="10.3" cy="25.2" r="1" fill="#511740" opacity="0.8"/></g></g><g transform="translate(389.12,232.90)"><defs><linearGradient id="g21" x1="0" y1="20" x2="0" y2="49" gradientUnits="userSpaceOnUse"><stop offset="0" stop-color="#784f6f"/><stop offset="0.42" stop-color="#784f6f"/><stop offset="0.72" stop-color="#36203d"/><stop offset="1" stop-color="#36203d"/></linearGradient></defs><path d="M46,28 C49,29.5 52,31 55.6,32.2 L55.2,33.4 C51.5,33 48.5,32 46.5,31.8 Z" fill="#784f6f"/><path d="M20,20 C22,22 23.5,24.5 26,25.5 L43,26.3 C46,26.8 48,29 48.6,32 C49,34.5 48.5,36.5 47.6,38.5 L47.2,42 L48,47.8 L45.6,48.4 L45.2,42.5 L44.8,39.2 L43.2,39.2 L42.8,42 L42.4,46 L40.2,46.4 L40.6,42 L40.4,38.2 C37,38.4 33,38.4 30,38 C29,39.5 28.5,41 28.4,43 L28.2,49 L25.8,49.6 L25.6,43.5 L25.4,39.6 L24.6,43.5 L23.8,51 L20.8,51.6 L21.6,44 L21.4,37.5 C19.8,34.5 17.5,29 15,24.5 Z" fill="url(#g21)" stroke="#36203d" stroke-width="0.7" stroke-opacity="0.45"/><path d="M30.0,28.5 l1.5,6" stroke="#36203d" stroke-width="1.3" opacity="0.18"/><path d="M35.0,28.5 l1.5,6" stroke="#36203d" stroke-width="1.3" opacity="0.18"/><path d="M40.0,28.5 l1.5,6" stroke="#36203d" stroke-width="1.3" opacity="0.18"/><path d="M31,38 C34,34.5 40,34.5 43,38 Z" fill="#8a6d81" opacity="0.45"/><g transform="translate(-3,-2)"><path d="M9.5,25 C10,23 12.5,21.2 15.5,20.5 L19,20 C21.5,20.5 23,23 23,26 C22.5,29 20.5,31 18,31.2 C15.5,31 13,30 11.5,28.5 C10.2,27.5 9.5,26.3 9.5,25 Z" fill="#784f6f"/><path d="M9.5,25 C10,23 12.5,21.5 15,21.5 C16.5,24 17,27 16.5,30.6 C14.5,30.4 12.5,29.4 11.5,28.5 C10.2,27.5 9.5,26.3 9.5,25 Z" fill="#8a6d81"/><path d="M18.2,20.8 L19.4,15.2 L21,19.6 L23.6,16.4 L23,21.8 Z" fill="#36203d"/><circle cx="10.3" cy="25.2" r="1" fill="#36203d" opacity="0.8"/></g></g><g transform="translate(463.80,232.90)"><defs><linearGradient id="g22" x1="0" y1="20" x2="0" y2="49" gradientUnits="userSpaceOnUse"><stop offset="0" stop-color="#929262"/><stop offset="0.42" stop-color="#929262"/><stop offset="0.72" stop-color="#514225"/><stop offset="1" stop-color="#514225"/></linearGradient></defs><path d="M46,28 C49,29.5 52,31 55.6,32.2 L55.2,33.4 C51.5,33 48.5,32 46.5,31.8 Z" fill="#929262"/><path d="M20,20 C22,22 23.5,24.5 26,25.5 L43,26.3 C46,26.8 48,29 48.6,32 C49,34.5 48.5,36.5 47.6,38.5 L47.2,42 L48,47.8 L45.6,48.4 L45.2,42.5 L44.8,39.2 L43.2,39.2 L42.8,42 L42.4,46 L40.2,46.4 L40.6,42 L40.4,38.2 C37,38.4 33,38.4 30,38 C29,39.5 28.5,41 28.4,43 L28.2,49 L25.8,49.6 L25.6,43.5 L25.4,39.6 L24.6,43.5 L23.8,51 L20.8,51.6 L21.6,44 L21.4,37.5 C19.8,34.5 17.5,29 15,24.5 Z" fill="url(#g22)" stroke="#514225" stroke-width="0.7" stroke-opacity="0.45"/><path d="M30.0,28.5 l1.5,6" stroke="#514225" stroke-width="1.3" opacity="0.18"/><path d="M35.0,28.5 l1.5,6" stroke="#514225" stroke-width="1.3" opacity="0.18"/><path d="M40.0,28.5 l1.5,6" stroke="#514225" stroke-width="1.3" opacity="0.18"/><path d="M26,27.5 C28,21.5 34,20.5 41,23.5 L38,29.0 C34,29.5 30,29.5 26,27.5 Z" fill="#9a7a4a" opacity="0.85"/><path d="M31,38 C34,34.5 40,34.5 43,38 Z" fill="#9e6d48" opacity="0.45"/><path d="M7,21.5 C9,20 12.5,18.8 16,18.3 L20.5,17.2 C22,18.5 22.5,20.5 21.5,23.5 C19.5,24.5 17,25 15,24.8 C12.5,24.2 10,23.6 7,22.8 Z" fill="#9e6d48"/><path d="M15,18.4 C17,16.8 19,16.2 21,16.6 L21.6,19.6 C19.5,19.2 17,19 15,18.4 Z" fill="#514225"/><path d="M18,19.5 C21,20 22.5,21.5 21.5,24 C20,24.6 18.5,24.8 17,24.8 Z" fill="#929262" opacity="0.85"/></g><g transform="translate(538.48,232.90)"><defs><linearGradient id="g23" x1="0" y1="20" x2="0" y2="49" gradientUnits="userSpaceOnUse"><stop offset="0" stop-color="#8b547d"/><stop offset="0.42" stop-color="#8b547d"/><stop offset="0.72" stop-color="#421c39"/><stop offset="1" stop-color="#421c39"/></linearGradient></defs><path d="M46.5,30 L51,33.5 L47.8,34.2 Z" fill="#8b547d"/><path d="M20,20 C22,22 23.5,24.5 26,25.5 L43,26.3 C46,26.8 48,29 48.6,32 C49,34.5 48.5,36.5 47.6,38.5 L47.2,42 L48,47.8 L45.6,48.4 L45.2,42.5 L44.8,39.2 L43.2,39.2 L42.8,42 L42.4,46 L40.2,46.4 L40.6,42 L40.4,38.2 C37,38.4 33,38.4 30,38 C29,39.5 28.5,41 28.4,43 L28.2,49 L25.8,49.6 L25.6,43.5 L25.4,39.6 L24.6,43.5 L23.8,51 L20.8,51.6 L21.6,44 L21.4,37.5 C19.8,34.5 17.5,29 15,24.5 Z" fill="url(#g23)" stroke="#421c39" stroke-width="0.7" stroke-opacity="0.45"/><path d="M30.0,28.5 l1.5,6" stroke="#421c39" stroke-width="1.3" opacity="0.18"/><path d="M35.0,28.5 l1.5,6" stroke="#421c39" stroke-width="1.3" opacity="0.18"/><path d="M40.0,28.5 l1.5,6" stroke="#421c39" stroke-width="1.3" opacity="0.18"/><path d="M31,38 C34,34.5 40,34.5 43,38 Z" fill="#906481" opacity="0.45"/><path d="M7,21.5 C9,20 12.5,18.8 16,18.3 L20.5,17.2 C22,18.5 22.5,20.5 21.5,23.5 C19.5,24.5 17,25 15,24.8 C12.5,24.2 10,23.6 7,22.8 Z" fill="#906481"/><path d="M15,18.4 C17,16.8 19,16.2 21,16.6 L21.6,19.6 C19.5,19.2 17,19 15,18.4 Z" fill="#421c39"/><path d="M18,19.5 C21,20 22.5,21.5 21.5,24 C20,24.6 18.5,24.8 17,24.8 Z" fill="#8b547d" opacity="0.85"/></g><g transform="translate(613.16,232.90)"><defs><linearGradient id="g24" x1="0" y1="20" x2="0" y2="49" gradientUnits="userSpaceOnUse"><stop offset="0" stop-color="#6a8654"/><stop offset="0.42" stop-color="#6a8654"/><stop offset="0.72" stop-color="#252534"/><stop offset="1" stop-color="#252534"/></linearGradient></defs><path d="M46,28 C49,29.5 52,31 55.6,32.2 L55.2,33.4 C51.5,33 48.5,32 46.5,31.8 Z" fill="#6a8654"/><path d="M20,20 C22,22 23.5,24.5 26,25.5 L43,26.3 C46,26.8 48,29 48.6,32 C49,34.5 48.5,36.5 47.6,38.5 L47.2,42 L48,47.8 L45.6,48.4 L45.2,42.5 L44.8,39.2 L43.2,39.2 L42.8,42 L42.4,46 L40.2,46.4 L40.6,42 L40.4,38.2 C37,38.4 33,38.4 30,38 C29,39.5 28.5,41 28.4,43 L28.2,49 L25.8,49.6 L25.6,43.5 L25.4,39.6 L24.6,43.5 L23.8,51 L20.8,51.6 L21.6,44 L21.4,37.5 C19.8,34.5 17.5,29 15,24.5 Z" fill="url(#g24)" stroke="#252534" stroke-width="0.7" stroke-opacity="0.45"/><path d="M30.0,28.5 l1.5,6" stroke="#252534" stroke-width="1.3" opacity="0.18"/><path d="M35.0,28.5 l1.5,6" stroke="#252534" stroke-width="1.3" opacity="0.18"/><path d="M40.0,28.5 l1.5,6" stroke="#252534" stroke-width="1.3" opacity="0.18"/><path d="M27,27.3 L28.8,23.5 L29.6,27.5 Z" fill="#252534"/><path d="M31,27.6 L32.8,23.8 L33.6,27.8 Z" fill="#252534"/><path d="M35,27.900000000000002 L36.8,24.1 L37.6,28.1 Z" fill="#252534"/><path d="M39,28.2 L40.8,24.4 L41.6,28.4 Z" fill="#252534"/><path d="M43,28.5 L44.8,24.7 L45.6,28.7 Z" fill="#252534"/><path d="M31,38 C34,34.5 40,34.5 43,38 Z" fill="#7c8a6d" opacity="0.45"/><path d="M7,21.5 C9,20 12.5,18.8 16,18.3 L20.5,17.2 C22,18.5 22.5,20.5 21.5,23.5 C19.5,24.5 17,25 15,24.8 C12.5,24.2 10,23.6 7,22.8 Z" fill="#7c8a6d"/><path d="M15,18.4 C17,16.8 19,16.2 21,16.6 L21.6,19.6 C19.5,19.2 17,19 15,18.4 Z" fill="#252534"/><path d="M18,19.5 C21,20 22.5,21.5 21.5,24 C20,24.6 18.5,24.8 17,24.8 Z" fill="#6a8654" opacity="0.85"/></g><g transform="translate(90.40,307.70)"><defs><linearGradient id="g25" x1="0" y1="20" x2="0" y2="52" gradientUnits="userSpaceOnUse"><stop offset="0" stop-color="#5c416a"/><stop offset="0.42" stop-color="#5c416a"/><stop offset="0.72" stop-color="#251736"/><stop offset="1" stop-color="#251736"/></linearGradient></defs><path d="M49,30 L53.8,34.2 L50.2,35 Z" fill="#5c416a"/><path d="M18,20.5 C21,22 24,25 28.5,27 L45,28.6 C48.5,29.3 50.5,31.3 50.6,34 C50.6,36 50,37.5 49,39 L48.8,44 L48.6,50.5 L45.8,51 L46,45 L45.4,40.8 L44,40.8 L43.8,47 L43,49.8 L40.4,49.8 L41.2,44 L40.4,39.8 L33.5,39.4 C31.5,39.8 30.8,41 30.4,44 L29,53.5 L24.8,54.4 L25.6,46 L24.6,40.8 C22.5,38 20.5,35 19,31 Z" fill="url(#g25)" stroke="#251736" stroke-width="0.7" stroke-opacity="0.45"/><path d="M30.0,26.5 l1.5,6" stroke="#251736" stroke-width="1.3" opacity="0.18"/><path d="M35.0,26.5 l1.5,6" stroke="#251736" stroke-width="1.3" opacity="0.18"/><path d="M40.0,26.5 l1.5,6" stroke="#251736" stroke-width="1.3" opacity="0.18"/><ellipse cx="33" cy="30.5" rx="5.5" ry="3" fill="#3a9a9a" opacity="0.75"/><path d="M31,39.3 C34,35.8 40,35.8 43,39.3 Z" fill="#7c6d7c" opacity="0.45"/><g transform=""><path d="M9.5,25 C10,23 12.5,21.2 15.5,20.5 L19,20 C21.5,20.5 23,23 23,26 C22.5,29 20.5,31 18,31.2 C15.5,31 13,30 11.5,28.5 C10.2,27.5 9.5,26.3 9.5,25 Z" fill="#5c416a"/><path d="M9.5,25 C10,23 12.5,21.5 15,21.5 C16.5,24 17,27 16.5,30.6 C14.5,30.4 12.5,29.4 11.5,28.5 C10.2,27.5 9.5,26.3 9.5,25 Z" fill="#7c6d7c"/><path d="M18.2,20.8 L19.4,15.2 L21,19.6 L23.6,16.4 L23,21.8 Z" fill="#251736"/><circle cx="10.3" cy="25.2" r="1" fill="#251736" opacity="0.8"/></g></g><g transform="translate(165.08,307.70)"><defs><linearGradient id="g26" x1="0" y1="20" x2="0" y2="49" gradientUnits="userSpaceOnUse"><stop offset="0" stop-color="#a6784f"/><stop offset="0.42" stop-color="#a6784f"/><stop offset="0.72" stop-color="#5f3425"/><stop offset="1" stop-color="#5f3425"/></linearGradient></defs><path d="M46.5,30 L51,33.5 L47.8,34.2 Z" fill="#a6784f"/><path d="M20,20 C22,22 23.5,24.5 26,25.5 L43,26.3 C46,26.8 48,29 48.6,32 C49,34.5 48.5,36.5 47.6,38.5 L47.2,42 L48,47.8 L45.6,48.4 L45.2,42.5 L44.8,39.2 L43.2,39.2 L42.8,42 L42.4,46 L40.2,46.4 L40.6,42 L40.4,38.2 C37,38.4 33,38.4 30,38 C29,39.5 28.5,41 28.4,43 L28.2,49 L25.8,49.6 L25.6,43.5 L25.4,39.6 L24.6,43.5 L23.8,51 L20.8,51.6 L21.6,44 L21.4,37.5 C19.8,34.5 17.5,29 15,24.5 Z" fill="url(#g26)" stroke="#5f3425" stroke-width="0.7" stroke-opacity="0.45"/><path d="M30.0,28.5 l1.5,6" stroke="#5f3425" stroke-width="1.3" opacity="0.18"/><path d="M35.0,28.5 l1.5,6" stroke="#5f3425" stroke-width="1.3" opacity="0.18"/><path d="M40.0,28.5 l1.5,6" stroke="#5f3425" stroke-width="1.3" opacity="0.18"/><ellipse cx="33" cy="29.5" rx="5.5" ry="3" fill="#6aa04a" opacity="0.75"/><path d="M31,38 C34,34.5 40,34.5 43,38 Z" fill="#ac8a6c" opacity="0.45"/><g transform="translate(-3,-2)"><path d="M9.5,25 C10,23 12.5,21.2 15.5,20.5 L19,20 C21.5,20.5 23,23 23,26 C22.5,29 20.5,31 18,31.2 C15.5,31 13,30 11.5,28.5 C10.2,27.5 9.5,26.3 9.5,25 Z" fill="#a6784f"/><path d="M9.5,25 C10,23 12.5,21.5 15,21.5 C16.5,24 17,27 16.5,30.6 C14.5,30.4 12.5,29.4 11.5,28.5 C10.2,27.5 9.5,26.3 9.5,25 Z" fill="#ac8a6c"/><path d="M18.2,20.8 L19.4,15.2 L21,19.6 L23.6,16.4 L23,21.8 Z" fill="#5f3425"/><circle cx="10.3" cy="25.2" r="1" fill="#5f3425" opacity="0.8"/></g></g><g transform="translate(239.76,307.70)"><defs><linearGradient id="g27" x1="0" y1="20" x2="0" y2="52" gradientUnits="userSpaceOnUse"><stop offset="0" stop-color="#6a6f7d"/><stop offset="0.42" stop-color="#6a6f7d"/><stop offset="0.72" stop-color="#252b3d"/><stop offset="1" stop-color="#252b3d"/></linearGradient></defs><path d="M49,30 L53.8,34.2 L50.2,35 Z" fill="#6a6f7d"/><path d="M18,20.5 C21,22 24,25 28.5,27 L45,28.6 C48.5,29.3 50.5,31.3 50.6,34 C50.6,36 50,37.5 49,39 L48.8,44 L48.6,50.5 L45.8,51 L46,45 L45.4,40.8 L44,40.8 L43.8,47 L43,49.8 L40.4,49.8 L41.2,44 L40.4,39.8 L33.5,39.4 C31.5,39.8 30.8,41 30.4,44 L29,53.5 L24.8,54.4 L25.6,46 L24.6,40.8 C22.5,38 20.5,35 19,31 Z" fill="url(#g27)" stroke="#252b3d" stroke-width="0.7" stroke-opacity="0.45"/><path d="M30.0,26.5 l1.5,6" stroke="#252b3d" stroke-width="1.3" opacity="0.18"/><path d="M35.0,26.5 l1.5,6" stroke="#252b3d" stroke-width="1.3" opacity="0.18"/><path d="M40.0,26.5 l1.5,6" stroke="#252b3d" stroke-width="1.3" opacity="0.18"/><path d="M26,28 C28,22 34,21 41,24 L38,29.5 C34,30 30,30 26,28 Z" fill="#3a3a50" opacity="0.85"/><path d="M31,39.3 C34,35.8 40,35.8 43,39.3 Z" fill="#8c8a90" opacity="0.45"/><g transform=""><path d="M9.5,25 C10,23 12.5,21.2 15.5,20.5 L19,20 C21.5,20.5 23,23 23,26 C22.5,29 20.5,31 18,31.2 C15.5,31 13,30 11.5,28.5 C10.2,27.5 9.5,26.3 9.5,25 Z" fill="#6a6f7d"/><path d="M9.5,25 C10,23 12.5,21.5 15,21.5 C16.5,24 17,27 16.5,30.6 C14.5,30.4 12.5,29.4 11.5,28.5 C10.2,27.5 9.5,26.3 9.5,25 Z" fill="#8c8a90"/><path d="M18.2,20.8 L19.4,15.2 L21,19.6 L23.6,16.4 L23,21.8 Z" fill="#252b3d"/><circle cx="10.3" cy="25.2" r="1" fill="#252b3d" opacity="0.8"/></g></g><g transform="translate(314.44,307.70)"><defs><linearGradient id="g28" x1="0" y1="20" x2="0" y2="49" gradientUnits="userSpaceOnUse"><stop offset="0" stop-color="#995c41"/><stop offset="0.42" stop-color="#995c41"/><stop offset="0.72" stop-color="#34252b"/><stop offset="1" stop-color="#34252b"/></linearGradient></defs><path d="M46,28 C49,29.5 52,31 55.6,32.2 L55.2,33.4 C51.5,33 48.5,32 46.5,31.8 Z" fill="#995c41"/><path d="M20,20 C22,22 23.5,24.5 26,25.5 L43,26.3 C46,26.8 48,29 48.6,32 C49,34.5 48.5,36.5 47.6,38.5 L47.2,42 L48,47.8 L45.6,48.4 L45.2,42.5 L44.8,39.2 L43.2,39.2 L42.8,42 L42.4,46 L40.2,46.4 L40.6,42 L40.4,38.2 C37,38.4 33,38.4 30,38 C29,39.5 28.5,41 28.4,43 L28.2,49 L25.8,49.6 L25.6,43.5 L25.4,39.6 L24.6,43.5 L23.8,51 L20.8,51.6 L21.6,44 L21.4,37.5 C19.8,34.5 17.5,29 15,24.5 Z" fill="url(#g28)" stroke="#34252b" stroke-width="0.7" stroke-opacity="0.45"/><path d="M30.0,28.5 l1.5,6" stroke="#34252b" stroke-width="1.3" opacity="0.18"/><path d="M35.0,28.5 l1.5,6" stroke="#34252b" stroke-width="1.3" opacity="0.18"/><path d="M40.0,28.5 l1.5,6" stroke="#34252b" stroke-width="1.3" opacity="0.18"/><ellipse cx="33" cy="29.5" rx="5.5" ry="3" fill="#4a3030" opacity="0.75"/><path d="M31,38 C34,34.5 40,34.5 43,38 Z" fill="#ac815f" opacity="0.45"/><path d="M7,21.5 C9,20 12.5,18.8 16,18.3 L20.5,17.2 C22,18.5 22.5,20.5 21.5,23.5 C19.5,24.5 17,25 15,24.8 C12.5,24.2 10,23.6 7,22.8 Z" fill="#ac815f"/><path d="M15,18.4 C17,16.8 19,16.2 21,16.6 L21.6,19.6 C19.5,19.2 17,19 15,18.4 Z" fill="#34252b"/><path d="M18,19.5 C21,20 22.5,21.5 21.5,24 C20,24.6 18.5,24.8 17,24.8 Z" fill="#995c41" opacity="0.85"/></g><g transform="translate(389.12,307.70)"><defs><linearGradient id="g29" x1="0" y1="20" x2="0" y2="49" gradientUnits="userSpaceOnUse"><stop offset="0" stop-color="#6a5c78"/><stop offset="0.42" stop-color="#6a5c78"/><stop offset="0.72" stop-color="#342742"/><stop offset="1" stop-color="#342742"/></linearGradient></defs><path d="M46,28 C49,29.5 52,31 55.6,32.2 L55.2,33.4 C51.5,33 48.5,32 46.5,31.8 Z" fill="#6a5c78"/><path d="M20,20 C22,22 23.5,24.5 26,25.5 L43,26.3 C46,26.8 48,29 48.6,32 C49,34.5 48.5,36.5 47.6,38.5 L47.2,42 L48,47.8 L45.6,48.4 L45.2,42.5 L44.8,39.2 L43.2,39.2 L42.8,42 L42.4,46 L40.2,46.4 L40.6,42 L40.4,38.2 C37,38.4 33,38.4 30,38 C29,39.5 28.5,41 28.4,43 L28.2,49 L25.8,49.6 L25.6,43.5 L25.4,39.6 L24.6,43.5 L23.8,51 L20.8,51.6 L21.6,44 L21.4,37.5 C19.8,34.5 17.5,29 15,24.5 Z" fill="url(#g29)" stroke="#342742" stroke-width="0.7" stroke-opacity="0.45"/><path d="M30.0,28.5 l1.5,6" stroke="#342742" stroke-width="1.3" opacity="0.18"/><path d="M35.0,28.5 l1.5,6" stroke="#342742" stroke-width="1.3" opacity="0.18"/><path d="M40.0,28.5 l1.5,6" stroke="#342742" stroke-width="1.3" opacity="0.18"/><path d="M31,38 C34,34.5 40,34.5 43,38 Z" fill="#8c8190" opacity="0.45"/><g transform="translate(-3,-2)"><path d="M9.5,25 C10,23 12.5,21.2 15.5,20.5 L19,20 C21.5,20.5 23,23 23,26 C22.5,29 20.5,31 18,31.2 C15.5,31 13,30 11.5,28.5 C10.2,27.5 9.5,26.3 9.5,25 Z" fill="#6a5c78"/><path d="M9.5,25 C10,23 12.5,21.5 15,21.5 C16.5,24 17,27 16.5,30.6 C14.5,30.4 12.5,29.4 11.5,28.5 C10.2,27.5 9.5,26.3 9.5,25 Z" fill="#8c8190"/><path d="M18.2,20.8 L19.4,15.2 L21,19.6 L23.6,16.4 L23,21.8 Z" fill="#342742"/><circle cx="10.3" cy="25.2" r="1" fill="#342742" opacity="0.8"/></g></g><g transform="translate(463.80,307.70)"><defs><linearGradient id="g30" x1="0" y1="20" x2="0" y2="52" gradientUnits="userSpaceOnUse"><stop offset="0" stop-color="#92334f"/><stop offset="0.42" stop-color="#92334f"/><stop offset="0.72" stop-color="#51172b"/><stop offset="1" stop-color="#51172b"/></linearGradient></defs><path d="M49,30 C52,32.5 55,35 58,37 L57.2,38 C54,37 51,36 49.5,35 Z" fill="#92334f"/><path d="M18,20.5 C21,22 24,25 28.5,27 L45,28.6 C48.5,29.3 50.5,31.3 50.6,34 C50.6,36 50,37.5 49,39 L48.8,44 L48.6,50.5 L45.8,51 L46,45 L45.4,40.8 L44,40.8 L43.8,47 L43,49.8 L40.4,49.8 L41.2,44 L40.4,39.8 L33.5,39.4 C31.5,39.8 30.8,41 30.4,44 L29,53.5 L24.8,54.4 L25.6,46 L24.6,40.8 C22.5,38 20.5,35 19,31 Z" fill="url(#g30)" stroke="#51172b" stroke-width="0.7" stroke-opacity="0.45"/><path d="M30.0,26.5 l1.5,6" stroke="#51172b" stroke-width="1.3" opacity="0.18"/><path d="M35.0,26.5 l1.5,6" stroke="#51172b" stroke-width="1.3" opacity="0.18"/><path d="M40.0,26.5 l1.5,6" stroke="#51172b" stroke-width="1.3" opacity="0.18"/><path d="M26,28 C28,22 34,21 41,24 L38,29.5 C34,30 30,30 26,28 Z" fill="#8a7a60" opacity="0.85"/><path d="M31,39.3 C34,35.8 40,35.8 43,39.3 Z" fill="#a58173" opacity="0.45"/><g transform=""><path d="M9.5,25 C10,23 12.5,21.2 15.5,20.5 L19,20 C21.5,20.5 23,23 23,26 C22.5,29 20.5,31 18,31.2 C15.5,31 13,30 11.5,28.5 C10.2,27.5 9.5,26.3 9.5,25 Z" fill="#92334f"/><path d="M9.5,25 C10,23 12.5,21.5 15,21.5 C16.5,24 17,27 16.5,30.6 C14.5,30.4 12.5,29.4 11.5,28.5 C10.2,27.5 9.5,26.3 9.5,25 Z" fill="#a58173"/><path d="M18.2,20.8 L19.4,15.2 L21,19.6 L23.6,16.4 L23,21.8 Z" fill="#51172b"/><circle cx="10.3" cy="25.2" r="1" fill="#51172b" opacity="0.8"/></g></g><g transform="translate(538.48,307.70)"><defs><linearGradient id="g31" x1="0" y1="20" x2="0" y2="52" gradientUnits="userSpaceOnUse"><stop offset="0" stop-color="#8b386f"/><stop offset="0.42" stop-color="#8b386f"/><stop offset="0.72" stop-color="#481739"/><stop offset="1" stop-color="#481739"/></linearGradient></defs><path d="M49,30 C52,32.5 55,35 58,37 L57.2,38 C54,37 51,36 49.5,35 Z" fill="#8b386f"/><path d="M18,20.5 C21,22 24,25 28.5,27 L45,28.6 C48.5,29.3 50.5,31.3 50.6,34 C50.6,36 50,37.5 49,39 L48.8,44 L48.6,50.5 L45.8,51 L46,45 L45.4,40.8 L44,40.8 L43.8,47 L43,49.8 L40.4,49.8 L41.2,44 L40.4,39.8 L33.5,39.4 C31.5,39.8 30.8,41 30.4,44 L29,53.5 L24.8,54.4 L25.6,46 L24.6,40.8 C22.5,38 20.5,35 19,31 Z" fill="url(#g31)" stroke="#481739" stroke-width="0.7" stroke-opacity="0.45"/><path d="M30.0,26.5 l1.5,6" stroke="#481739" stroke-width="1.3" opacity="0.18"/><path d="M35.0,26.5 l1.5,6" stroke="#481739" stroke-width="1.3" opacity="0.18"/><path d="M40.0,26.5 l1.5,6" stroke="#481739" stroke-width="1.3" opacity="0.18"/><path d="M26,28 C28,22 34,21 41,24 L38,29.5 C34,30 30,30 26,28 Z" fill="#501a50" opacity="0.85"/><path d="M31,39.3 C34,35.8 40,35.8 43,39.3 Z" fill="#9e6c88" opacity="0.45"/><g transform=""><path d="M9.5,25 C10,23 12.5,21.2 15.5,20.5 L19,20 C21.5,20.5 23,23 23,26 C22.5,29 20.5,31 18,31.2 C15.5,31 13,30 11.5,28.5 C10.2,27.5 9.5,26.3 9.5,25 Z" fill="#8b386f"/><path d="M9.5,25 C10,23 12.5,21.5 15,21.5 C16.5,24 17,27 16.5,30.6 C14.5,30.4 12.5,29.4 11.5,28.5 C10.2,27.5 9.5,26.3 9.5,25 Z" fill="#9e6c88"/><path d="M18.2,20.8 L19.4,15.2 L21,19.6 L23.6,16.4 L23,21.8 Z" fill="#481739"/><circle cx="10.3" cy="25.2" r="1" fill="#481739" opacity="0.8"/></g></g><g transform="translate(613.16,307.70)"><defs><linearGradient id="g32" x1="0" y1="20" x2="0" y2="49" gradientUnits="userSpaceOnUse"><stop offset="0" stop-color="#784f6f"/><stop offset="0.42" stop-color="#784f6f"/><stop offset="0.72" stop-color="#361c39"/><stop offset="1" stop-color="#361c39"/></linearGradient></defs><path d="M46,28 C49,29.5 52,31 55.6,32.2 L55.2,33.4 C51.5,33 48.5,32 46.5,31.8 Z" fill="#784f6f"/><path d="M20,20 C22,22 23.5,24.5 26,25.5 L43,26.3 C46,26.8 48,29 48.6,32 C49,34.5 48.5,36.5 47.6,38.5 L47.2,42 L48,47.8 L45.6,48.4 L45.2,42.5 L44.8,39.2 L43.2,39.2 L42.8,42 L42.4,46 L40.2,46.4 L40.6,42 L40.4,38.2 C37,38.4 33,38.4 30,38 C29,39.5 28.5,41 28.4,43 L28.2,49 L25.8,49.6 L25.6,43.5 L25.4,39.6 L24.6,43.5 L23.8,51 L20.8,51.6 L21.6,44 L21.4,37.5 C19.8,34.5 17.5,29 15,24.5 Z" fill="url(#g32)" stroke="#361c39" stroke-width="0.7" stroke-opacity="0.45"/><path d="M30.0,28.5 l1.5,6" stroke="#361c39" stroke-width="1.3" opacity="0.18"/><path d="M35.0,28.5 l1.5,6" stroke="#361c39" stroke-width="1.3" opacity="0.18"/><path d="M40.0,28.5 l1.5,6" stroke="#361c39" stroke-width="1.3" opacity="0.18"/><path d="M27,27.3 L28.8,23.5 L29.6,27.5 Z" fill="#361c39"/><path d="M31,27.6 L32.8,23.8 L33.6,27.8 Z" fill="#361c39"/><path d="M35,27.900000000000002 L36.8,24.1 L37.6,28.1 Z" fill="#361c39"/><path d="M39,28.2 L40.8,24.4 L41.6,28.4 Z" fill="#361c39"/><path d="M43,28.5 L44.8,24.7 L45.6,28.7 Z" fill="#361c39"/><path d="M31,38 C34,34.5 40,34.5 43,38 Z" fill="#8a7c90" opacity="0.45"/><path d="M7,21.5 C9,20 12.5,18.8 16,18.3 L20.5,17.2 C22,18.5 22.5,20.5 21.5,23.5 C19.5,24.5 17,25 15,24.8 C12.5,24.2 10,23.6 7,22.8 Z" fill="#8a7c90"/><path d="M15,18.4 C17,16.8 19,16.2 21,16.6 L21.6,19.6 C19.5,19.2 17,19 15,18.4 Z" fill="#361c39"/><path d="M18,19.5 C21,20 22.5,21.5 21.5,24 C20,24.6 18.5,24.8 17,24.8 Z" fill="#784f6f" opacity="0.85"/></g><g transform="translate(90.40,382.50)"><defs><linearGradient id="g33" x1="0" y1="20" x2="0" y2="49" gradientUnits="userSpaceOnUse"><stop offset="0" stop-color="#78866f"/><stop offset="0.42" stop-color="#78866f"/><stop offset="0.72" stop-color="#272736"/><stop offset="1" stop-color="#272736"/></linearGradient></defs><path d="M46.5,30 L51,33.5 L47.8,34.2 Z" fill="#78866f"/><path d="M20,20 C22,22 23.5,24.5 26,25.5 L43,26.3 C46,26.8 48,29 48.6,32 C49,34.5 48.5,36.5 47.6,38.5 L47.2,42 L48,47.8 L45.6,48.4 L45.2,42.5 L44.8,39.2 L43.2,39.2 L42.8,42 L42.4,46 L40.2,46.4 L40.6,42 L40.4,38.2 C37,38.4 33,38.4 30,38 C29,39.5 28.5,41 28.4,43 L28.2,49 L25.8,49.6 L25.6,43.5 L25.4,39.6 L24.6,43.5 L23.8,51 L20.8,51.6 L21.6,44 L21.4,37.5 C19.8,34.5 17.5,29 15,24.5 Z" fill="url(#g33)" stroke="#272736" stroke-width="0.7" stroke-opacity="0.45"/><path d="M30.0,28.5 l1.5,6" stroke="#272736" stroke-width="1.3" opacity="0.18"/><path d="M35.0,28.5 l1.5,6" stroke="#272736" stroke-width="1.3" opacity="0.18"/><path d="M40.0,28.5 l1.5,6" stroke="#272736" stroke-width="1.3" opacity="0.18"/><ellipse cx="33" cy="29.5" rx="5.5" ry="3" fill="#5a6a4a" opacity="0.75"/><path d="M31,38 C34,34.5 40,34.5 43,38 Z" fill="#90907a" opacity="0.45"/><path d="M7,21.5 C9,20 12.5,18.8 16,18.3 L20.5,17.2 C22,18.5 22.5,20.5 21.5,23.5 C19.5,24.5 17,25 15,24.8 C12.5,24.2 10,23.6 7,22.8 Z" fill="#90907a"/><path d="M15,18.4 C17,16.8 19,16.2 21,16.6 L21.6,19.6 C19.5,19.2 17,19 15,18.4 Z" fill="#272736"/><path d="M18,19.5 C21,20 22.5,21.5 21.5,24 C20,24.6 18.5,24.8 17,24.8 Z" fill="#78866f" opacity="0.85"/></g><g transform="translate(165.08,382.50)"><defs><linearGradient id="g34" x1="0" y1="20" x2="0" y2="49" gradientUnits="userSpaceOnUse"><stop offset="0" stop-color="#6a5c8b"/><stop offset="0.42" stop-color="#6a5c8b"/><stop offset="0.72" stop-color="#272748"/><stop offset="1" stop-color="#272748"/></linearGradient></defs><path d="M46,28 C49,29.5 52,31 55.6,32.2 L55.2,33.4 C51.5,33 48.5,32 46.5,31.8 Z" fill="#6a5c8b"/><path d="M20,20 C22,22 23.5,24.5 26,25.5 L43,26.3 C46,26.8 48,29 48.6,32 C49,34.5 48.5,36.5 47.6,38.5 L47.2,42 L48,47.8 L45.6,48.4 L45.2,42.5 L44.8,39.2 L43.2,39.2 L42.8,42 L42.4,46 L40.2,46.4 L40.6,42 L40.4,38.2 C37,38.4 33,38.4 30,38 C29,39.5 28.5,41 28.4,43 L28.2,49 L25.8,49.6 L25.6,43.5 L25.4,39.6 L24.6,43.5 L23.8,51 L20.8,51.6 L21.6,44 L21.4,37.5 C19.8,34.5 17.5,29 15,24.5 Z" fill="url(#g34)" stroke="#272748" stroke-width="0.7" stroke-opacity="0.45"/><path d="M30.0,28.5 l1.5,6" stroke="#272748" stroke-width="1.3" opacity="0.18"/><path d="M35.0,28.5 l1.5,6" stroke="#272748" stroke-width="1.3" opacity="0.18"/><path d="M40.0,28.5 l1.5,6" stroke="#272748" stroke-width="1.3" opacity="0.18"/><path d="M27,27.3 L28.8,23.5 L29.6,27.5 Z" fill="#272748"/><path d="M31,27.6 L32.8,23.8 L33.6,27.8 Z" fill="#272748"/><path d="M35,27.900000000000002 L36.8,24.1 L37.6,28.1 Z" fill="#272748"/><path d="M39,28.2 L40.8,24.4 L41.6,28.4 Z" fill="#272748"/><path d="M43,28.5 L44.8,24.7 L45.6,28.7 Z" fill="#272748"/><path d="M31,38 C34,34.5 40,34.5 43,38 Z" fill="#8a7c9e" opacity="0.45"/><path d="M7,21.5 C9,20 12.5,18.8 16,18.3 L20.5,17.2 C22,18.5 22.5,20.5 21.5,23.5 C19.5,24.5 17,25 15,24.8 C12.5,24.2 10,23.6 7,22.8 Z" fill="#8a7c9e"/><path d="M15,18.4 C17,16.8 19,16.2 21,16.6 L21.6,19.6 C19.5,19.2 17,19 15,18.4 Z" fill="#272748"/><path d="M18,19.5 C21,20 22.5,21.5 21.5,24 C20,24.6 18.5,24.8 17,24.8 Z" fill="#6a5c8b" opacity="0.85"/></g><g transform="translate(239.76,382.50)"><defs><linearGradient id="g35" x1="0" y1="20" x2="0" y2="49" gradientUnits="userSpaceOnUse"><stop offset="0" stop-color="#8b3341"/><stop offset="0.42" stop-color="#8b3341"/><stop offset="0.72" stop-color="#511724"/><stop offset="1" stop-color="#511724"/></linearGradient></defs><path d="M46,28 C49,29.5 52,31 55.6,32.2 L55.2,33.4 C51.5,33 48.5,32 46.5,31.8 Z" fill="#8b3341"/><path d="M20,20 C22,22 23.5,24.5 26,25.5 L43,26.3 C46,26.8 48,29 48.6,32 C49,34.5 48.5,36.5 47.6,38.5 L47.2,42 L48,47.8 L45.6,48.4 L45.2,42.5 L44.8,39.2 L43.2,39.2 L42.8,42 L42.4,46 L40.2,46.4 L40.6,42 L40.4,38.2 C37,38.4 33,38.4 30,38 C29,39.5 28.5,41 28.4,43 L28.2,49 L25.8,49.6 L25.6,43.5 L25.4,39.6 L24.6,43.5 L23.8,51 L20.8,51.6 L21.6,44 L21.4,37.5 C19.8,34.5 17.5,29 15,24.5 Z" fill="url(#g35)" stroke="#511724" stroke-width="0.7" stroke-opacity="0.45"/><path d="M30.0,28.5 l1.5,6" stroke="#511724" stroke-width="1.3" opacity="0.18"/><path d="M35.0,28.5 l1.5,6" stroke="#511724" stroke-width="1.3" opacity="0.18"/><path d="M40.0,28.5 l1.5,6" stroke="#511724" stroke-width="1.3" opacity="0.18"/><path d="M31,38 C34,34.5 40,34.5 43,38 Z" fill="#9e7373" opacity="0.45"/><g transform="translate(-3,-2)"><path d="M9.5,25 C10,23 12.5,21.2 15.5,20.5 L19,20 C21.5,20.5 23,23 23,26 C22.5,29 20.5,31 18,31.2 C15.5,31 13,30 11.5,28.5 C10.2,27.5 9.5,26.3 9.5,25 Z" fill="#8b3341"/><path d="M9.5,25 C10,23 12.5,21.5 15,21.5 C16.5,24 17,27 16.5,30.6 C14.5,30.4 12.5,29.4 11.5,28.5 C10.2,27.5 9.5,26.3 9.5,25 Z" fill="#9e7373"/><path d="M18.2,20.8 L19.4,15.2 L21,19.6 L23.6,16.4 L23,21.8 Z" fill="#511724"/><circle cx="10.3" cy="25.2" r="1" fill="#511724" opacity="0.8"/></g></g><g transform="translate(314.44,382.50)"><defs><linearGradient id="g36" x1="0" y1="20" x2="0" y2="49" gradientUnits="userSpaceOnUse"><stop offset="0" stop-color="#6a8654"/><stop offset="0.42" stop-color="#6a8654"/><stop offset="0.72" stop-color="#25252b"/><stop offset="1" stop-color="#25252b"/></linearGradient></defs><path d="M46,28 C49,29.5 52,31 55.6,32.2 L55.2,33.4 C51.5,33 48.5,32 46.5,31.8 Z" fill="#6a8654"/><path d="M20,20 C22,22 23.5,24.5 26,25.5 L43,26.3 C46,26.8 48,29 48.6,32 C49,34.5 48.5,36.5 47.6,38.5 L47.2,42 L48,47.8 L45.6,48.4 L45.2,42.5 L44.8,39.2 L43.2,39.2 L42.8,42 L42.4,46 L40.2,46.4 L40.6,42 L40.4,38.2 C37,38.4 33,38.4 30,38 C29,39.5 28.5,41 28.4,43 L28.2,49 L25.8,49.6 L25.6,43.5 L25.4,39.6 L24.6,43.5 L23.8,51 L20.8,51.6 L21.6,44 L21.4,37.5 C19.8,34.5 17.5,29 15,24.5 Z" fill="url(#g36)" stroke="#25252b" stroke-width="0.7" stroke-opacity="0.45"/><path d="M30.0,28.5 l1.5,6" stroke="#25252b" stroke-width="1.3" opacity="0.18"/><path d="M35.0,28.5 l1.5,6" stroke="#25252b" stroke-width="1.3" opacity="0.18"/><path d="M40.0,28.5 l1.5,6" stroke="#25252b" stroke-width="1.3" opacity="0.18"/><path d="M27,27.3 L28.8,23.5 L29.6,27.5 Z" fill="#25252b"/><path d="M31,27.6 L32.8,23.8 L33.6,27.8 Z" fill="#25252b"/><path d="M35,27.900000000000002 L36.8,24.1 L37.6,28.1 Z" fill="#25252b"/><path d="M39,28.2 L40.8,24.4 L41.6,28.4 Z" fill="#25252b"/><path d="M43,28.5 L44.8,24.7 L45.6,28.7 Z" fill="#25252b"/><path d="M31,38 C34,34.5 40,34.5 43,38 Z" fill="#819073" opacity="0.45"/><g transform="translate(-3,-2)"><path d="M9.5,25 C10,23 12.5,21.2 15.5,20.5 L19,20 C21.5,20.5 23,23 23,26 C22.5,29 20.5,31 18,31.2 C15.5,31 13,30 11.5,28.5 C10.2,27.5 9.5,26.3 9.5,25 Z" fill="#6a8654"/><path d="M9.5,25 C10,23 12.5,21.5 15,21.5 C16.5,24 17,27 16.5,30.6 C14.5,30.4 12.5,29.4 11.5,28.5 C10.2,27.5 9.5,26.3 9.5,25 Z" fill="#819073"/><path d="M18.2,20.8 L19.4,15.2 L21,19.6 L23.6,16.4 L23,21.8 Z" fill="#25252b"/><circle cx="10.3" cy="25.2" r="1" fill="#25252b" opacity="0.8"/></g></g><g transform="translate(389.12,382.50)"><defs><linearGradient id="g37" x1="0" y1="20" x2="0" y2="49" gradientUnits="userSpaceOnUse"><stop offset="0" stop-color="#6a4f78"/><stop offset="0.42" stop-color="#6a4f78"/><stop offset="0.72" stop-color="#27193d"/><stop offset="1" stop-color="#27193d"/></linearGradient></defs><path d="M46,28 C49,29.5 52,31 55.6,32.2 L55.2,33.4 C51.5,33 48.5,32 46.5,31.8 Z" fill="#6a4f78"/><path d="M20,20 C22,22 23.5,24.5 26,25.5 L43,26.3 C46,26.8 48,29 48.6,32 C49,34.5 48.5,36.5 47.6,38.5 L47.2,42 L48,47.8 L45.6,48.4 L45.2,42.5 L44.8,39.2 L43.2,39.2 L42.8,42 L42.4,46 L40.2,46.4 L40.6,42 L40.4,38.2 C37,38.4 33,38.4 30,38 C29,39.5 28.5,41 28.4,43 L28.2,49 L25.8,49.6 L25.6,43.5 L25.4,39.6 L24.6,43.5 L23.8,51 L20.8,51.6 L21.6,44 L21.4,37.5 C19.8,34.5 17.5,29 15,24.5 Z" fill="url(#g37)" stroke="#27193d" stroke-width="0.7" stroke-opacity="0.45"/><path d="M30.0,28.5 l1.5,6" stroke="#27193d" stroke-width="1.3" opacity="0.18"/><path d="M35.0,28.5 l1.5,6" stroke="#27193d" stroke-width="1.3" opacity="0.18"/><path d="M40.0,28.5 l1.5,6" stroke="#27193d" stroke-width="1.3" opacity="0.18"/><path d="M26,27.5 C28,21.5 34,20.5 41,23.5 L38,29.0 C34,29.5 30,29.5 26,27.5 Z" fill="#3a2a5a" opacity="0.85"/><path d="M31,38 C34,34.5 40,34.5 43,38 Z" fill="#7c6d88" opacity="0.45"/><g transform="translate(-3,-2)"><path d="M9.5,25 C10,23 12.5,21.2 15.5,20.5 L19,20 C21.5,20.5 23,23 23,26 C22.5,29 20.5,31 18,31.2 C15.5,31 13,30 11.5,28.5 C10.2,27.5 9.5,26.3 9.5,25 Z" fill="#6a4f78"/><path d="M9.5,25 C10,23 12.5,21.5 15,21.5 C16.5,24 17,27 16.5,30.6 C14.5,30.4 12.5,29.4 11.5,28.5 C10.2,27.5 9.5,26.3 9.5,25 Z" fill="#7c6d88"/><path d="M18.2,20.8 L19.4,15.2 L21,19.6 L23.6,16.4 L23,21.8 Z" fill="#27193d"/><circle cx="10.3" cy="25.2" r="1" fill="#27193d" opacity="0.8"/></g></g><g transform="translate(463.80,382.50)"><defs><linearGradient id="g38" x1="0" y1="20" x2="0" y2="49" gradientUnits="userSpaceOnUse"><stop offset="0" stop-color="#767b52"/><stop offset="0.42" stop-color="#767b52"/><stop offset="0.72" stop-color="#343434"/><stop offset="1" stop-color="#343434"/></linearGradient></defs><path d="M46,28 C49,29.5 52,31 55.6,32.2 L55.2,33.4 C51.5,33 48.5,32 46.5,31.8 Z" fill="#767b52"/><path d="M20,20 C22,22 23.5,24.5 26,25.5 L43,26.3 C46,26.8 48,29 48.6,32 C49,34.5 48.5,36.5 47.6,38.5 L47.2,42 L48,47.8 L45.6,48.4 L45.2,42.5 L44.8,39.2 L43.2,39.2 L42.8,42 L42.4,46 L40.2,46.4 L40.6,42 L40.4,38.2 C37,38.4 33,38.4 30,38 C29,39.5 28.5,41 28.4,43 L28.2,49 L25.8,49.6 L25.6,43.5 L25.4,39.6 L24.6,43.5 L23.8,51 L20.8,51.6 L21.6,44 L21.4,37.5 C19.8,34.5 17.5,29 15,24.5 Z" fill="url(#g38)" stroke="#343434" stroke-width="0.7" stroke-opacity="0.45"/><path d="M30.0,28.5 l1.5,6" stroke="#343434" stroke-width="1.3" opacity="0.18"/><path d="M35.0,28.5 l1.5,6" stroke="#343434" stroke-width="1.3" opacity="0.18"/><path d="M40.0,28.5 l1.5,6" stroke="#343434" stroke-width="1.3" opacity="0.18"/><ellipse cx="33" cy="29.5" rx="5.5" ry="3" fill="#a03a3a" opacity="0.75"/><path d="M31,38 C34,34.5 40,34.5 43,38 Z" fill="#908a73" opacity="0.45"/><path d="M7,21.5 C9,20 12.5,18.8 16,18.3 L20.5,17.2 C22,18.5 22.5,20.5 21.5,23.5 C19.5,24.5 17,25 15,24.8 C12.5,24.2 10,23.6 7,22.8 Z" fill="#908a73"/><path d="M15,18.4 C17,16.8 19,16.2 21,16.6 L21.6,19.6 C19.5,19.2 17,19 15,18.4 Z" fill="#343434"/><path d="M18,19.5 C21,20 22.5,21.5 21.5,24 C20,24.6 18.5,24.8 17,24.8 Z" fill="#767b52" opacity="0.85"/></g><g transform="translate(538.48,382.50)"><defs><linearGradient id="g39" x1="0" y1="20" x2="0" y2="49" gradientUnits="userSpaceOnUse"><stop offset="0" stop-color="#97524b"/><stop offset="0.42" stop-color="#97524b"/><stop offset="0.72" stop-color="#422525"/><stop offset="1" stop-color="#422525"/></linearGradient></defs><path d="M46,28 C49,29.5 52,31 55.6,32.2 L55.2,33.4 C51.5,33 48.5,32 46.5,31.8 Z" fill="#97524b"/><path d="M20,20 C22,22 23.5,24.5 26,25.5 L43,26.3 C46,26.8 48,29 48.6,32 C49,34.5 48.5,36.5 47.6,38.5 L47.2,42 L48,47.8 L45.6,48.4 L45.2,42.5 L44.8,39.2 L43.2,39.2 L42.8,42 L42.4,46 L40.2,46.4 L40.6,42 L40.4,38.2 C37,38.4 33,38.4 30,38 C29,39.5 28.5,41 28.4,43 L28.2,49 L25.8,49.6 L25.6,43.5 L25.4,39.6 L24.6,43.5 L23.8,51 L20.8,51.6 L21.6,44 L21.4,37.5 C19.8,34.5 17.5,29 15,24.5 Z" fill="url(#g39)" stroke="#422525" stroke-width="0.7" stroke-opacity="0.45"/><path d="M30.0,28.5 l1.5,6" stroke="#422525" stroke-width="1.3" opacity="0.18"/><path d="M35.0,28.5 l1.5,6" stroke="#422525" stroke-width="1.3" opacity="0.18"/><path d="M40.0,28.5 l1.5,6" stroke="#422525" stroke-width="1.3" opacity="0.18"/><ellipse cx="33" cy="29.5" rx="5.5" ry="3" fill="#6a4a50" opacity="0.75"/><path d="M31,38 C34,34.5 40,34.5 43,38 Z" fill="#ac8173" opacity="0.45"/><g transform="translate(-3,-2)"><path d="M9.5,25 C10,23 12.5,21.2 15.5,20.5 L19,20 C21.5,20.5 23,23 23,26 C22.5,29 20.5,31 18,31.2 C15.5,31 13,30 11.5,28.5 C10.2,27.5 9.5,26.3 9.5,25 Z" fill="#97524b"/><path d="M9.5,25 C10,23 12.5,21.5 15,21.5 C16.5,24 17,27 16.5,30.6 C14.5,30.4 12.5,29.4 11.5,28.5 C10.2,27.5 9.5,26.3 9.5,25 Z" fill="#ac8173"/><path d="M18.2,20.8 L19.4,15.2 L21,19.6 L23.6,16.4 L23,21.8 Z" fill="#422525"/><circle cx="10.3" cy="25.2" r="1" fill="#422525" opacity="0.8"/></g></g><g transform="translate(613.16,382.50)"><defs><linearGradient id="g40" x1="0" y1="20" x2="0" y2="49" gradientUnits="userSpaceOnUse"><stop offset="0" stop-color="#768468"/><stop offset="0.42" stop-color="#768468"/><stop offset="0.72" stop-color="#272736"/><stop offset="1" stop-color="#272736"/></linearGradient></defs><path d="M46,28 C49,29.5 52,31 55.6,32.2 L55.2,33.4 C51.5,33 48.5,32 46.5,31.8 Z" fill="#768468"/><path d="M20,20 C22,22 23.5,24.5 26,25.5 L43,26.3 C46,26.8 48,29 48.6,32 C49,34.5 48.5,36.5 47.6,38.5 L47.2,42 L48,47.8 L45.6,48.4 L45.2,42.5 L44.8,39.2 L43.2,39.2 L42.8,42 L42.4,46 L40.2,46.4 L40.6,42 L40.4,38.2 C37,38.4 33,38.4 30,38 C29,39.5 28.5,41 28.4,43 L28.2,49 L25.8,49.6 L25.6,43.5 L25.4,39.6 L24.6,43.5 L23.8,51 L20.8,51.6 L21.6,44 L21.4,37.5 C19.8,34.5 17.5,29 15,24.5 Z" fill="url(#g40)" stroke="#272736" stroke-width="0.7" stroke-opacity="0.45"/><path d="M30.0,28.5 l1.5,6" stroke="#272736" stroke-width="1.3" opacity="0.18"/><path d="M35.0,28.5 l1.5,6" stroke="#272736" stroke-width="1.3" opacity="0.18"/><path d="M40.0,28.5 l1.5,6" stroke="#272736" stroke-width="1.3" opacity="0.18"/><path d="M27,27.3 L28.8,23.5 L29.6,27.5 Z" fill="#272736"/><path d="M31,27.6 L32.8,23.8 L33.6,27.8 Z" fill="#272736"/><path d="M35,27.900000000000002 L36.8,24.1 L37.6,28.1 Z" fill="#272736"/><path d="M39,28.2 L40.8,24.4 L41.6,28.4 Z" fill="#272736"/><path d="M43,28.5 L44.8,24.7 L45.6,28.7 Z" fill="#272736"/><path d="M31,38 C34,34.5 40,34.5 43,38 Z" fill="#909081" opacity="0.45"/><g transform="translate(-3,-2)"><path d="M9.5,25 C10,23 12.5,21.2 15.5,20.5 L19,20 C21.5,20.5 23,23 23,26 C22.5,29 20.5,31 18,31.2 C15.5,31 13,30 11.5,28.5 C10.2,27.5 9.5,26.3 9.5,25 Z" fill="#768468"/><path d="M9.5,25 C10,23 12.5,21.5 15,21.5 C16.5,24 17,27 16.5,30.6 C14.5,30.4 12.5,29.4 11.5,28.5 C10.2,27.5 9.5,26.3 9.5,25 Z" fill="#909081"/><path d="M18.2,20.8 L19.4,15.2 L21,19.6 L23.6,16.4 L23,21.8 Z" fill="#272736"/><circle cx="10.3" cy="25.2" r="1" fill="#272736" opacity="0.8"/></g></g><g transform="translate(90.40,457.30)"><defs><linearGradient id="g41" x1="0" y1="20" x2="0" y2="52" gradientUnits="userSpaceOnUse"><stop offset="0" stop-color="#5c4178"/><stop offset="0.42" stop-color="#5c4178"/><stop offset="0.72" stop-color="#25173d"/><stop offset="1" stop-color="#25173d"/></linearGradient></defs><path d="M49,30 L53.8,34.2 L50.2,35 Z" fill="#5c4178"/><path d="M18,20.5 C21,22 24,25 28.5,27 L45,28.6 C48.5,29.3 50.5,31.3 50.6,34 C50.6,36 50,37.5 49,39 L48.8,44 L48.6,50.5 L45.8,51 L46,45 L45.4,40.8 L44,40.8 L43.8,47 L43,49.8 L40.4,49.8 L41.2,44 L40.4,39.8 L33.5,39.4 C31.5,39.8 30.8,41 30.4,44 L29,53.5 L24.8,54.4 L25.6,46 L24.6,40.8 C22.5,38 20.5,35 19,31 Z" fill="url(#g41)" stroke="#25173d" stroke-width="0.7" stroke-opacity="0.45"/><path d="M30.0,26.5 l1.5,6" stroke="#25173d" stroke-width="1.3" opacity="0.18"/><path d="M35.0,26.5 l1.5,6" stroke="#25173d" stroke-width="1.3" opacity="0.18"/><path d="M40.0,26.5 l1.5,6" stroke="#25173d" stroke-width="1.3" opacity="0.18"/><path d="M26,28 C28,22 34,21 41,24 L38,29.5 C34,30 30,30 26,28 Z" fill="#3a2a60" opacity="0.85"/><path d="M31,39.3 C34,35.8 40,35.8 43,39.3 Z" fill="#7c6d90" opacity="0.45"/><g transform=""><path d="M9.5,25 C10,23 12.5,21.2 15.5,20.5 L19,20 C21.5,20.5 23,23 23,26 C22.5,29 20.5,31 18,31.2 C15.5,31 13,30 11.5,28.5 C10.2,27.5 9.5,26.3 9.5,25 Z" fill="#5c4178"/><path d="M9.5,25 C10,23 12.5,21.5 15,21.5 C16.5,24 17,27 16.5,30.6 C14.5,30.4 12.5,29.4 11.5,28.5 C10.2,27.5 9.5,26.3 9.5,25 Z" fill="#7c6d90"/><path d="M18.2,20.8 L19.4,15.2 L21,19.6 L23.6,16.4 L23,21.8 Z" fill="#25173d"/><circle cx="10.3" cy="25.2" r="1" fill="#25173d" opacity="0.8"/></g></g><g transform="translate(165.08,457.30)"><defs><linearGradient id="g42" x1="0" y1="20" x2="0" y2="49" gradientUnits="userSpaceOnUse"><stop offset="0" stop-color="#905241"/><stop offset="0.42" stop-color="#905241"/><stop offset="0.72" stop-color="#422525"/><stop offset="1" stop-color="#422525"/></linearGradient></defs><path d="M46,28 C49,29.5 52,31 55.6,32.2 L55.2,33.4 C51.5,33 48.5,32 46.5,31.8 Z" fill="#905241"/><path d="M20,20 C22,22 23.5,24.5 26,25.5 L43,26.3 C46,26.8 48,29 48.6,32 C49,34.5 48.5,36.5 47.6,38.5 L47.2,42 L48,47.8 L45.6,48.4 L45.2,42.5 L44.8,39.2 L43.2,39.2 L42.8,42 L42.4,46 L40.2,46.4 L40.6,42 L40.4,38.2 C37,38.4 33,38.4 30,38 C29,39.5 28.5,41 28.4,43 L28.2,49 L25.8,49.6 L25.6,43.5 L25.4,39.6 L24.6,43.5 L23.8,51 L20.8,51.6 L21.6,44 L21.4,37.5 C19.8,34.5 17.5,29 15,24.5 Z" fill="url(#g42)" stroke="#422525" stroke-width="0.7" stroke-opacity="0.45"/><path d="M30.0,28.5 l1.5,6" stroke="#422525" stroke-width="1.3" opacity="0.18"/><path d="M35.0,28.5 l1.5,6" stroke="#422525" stroke-width="1.3" opacity="0.18"/><path d="M40.0,28.5 l1.5,6" stroke="#422525" stroke-width="1.3" opacity="0.18"/><path d="M31,38 C34,34.5 40,34.5 43,38 Z" fill="#ac8a73" opacity="0.45"/><g transform="translate(-3,-2)"><path d="M9.5,25 C10,23 12.5,21.2 15.5,20.5 L19,20 C21.5,20.5 23,23 23,26 C22.5,29 20.5,31 18,31.2 C15.5,31 13,30 11.5,28.5 C10.2,27.5 9.5,26.3 9.5,25 Z" fill="#905241"/><path d="M9.5,25 C10,23 12.5,21.5 15,21.5 C16.5,24 17,27 16.5,30.6 C14.5,30.4 12.5,29.4 11.5,28.5 C10.2,27.5 9.5,26.3 9.5,25 Z" fill="#ac8a73"/><path d="M18.2,20.8 L19.4,15.2 L21,19.6 L23.6,16.4 L23,21.8 Z" fill="#422525"/><circle cx="10.3" cy="25.2" r="1" fill="#422525" opacity="0.8"/></g></g><g transform="translate(239.76,457.30)"><defs><linearGradient id="g43" x1="0" y1="20" x2="0" y2="49" gradientUnits="userSpaceOnUse"><stop offset="0" stop-color="#903044"/><stop offset="0.42" stop-color="#903044"/><stop offset="0.72" stop-color="#511725"/><stop offset="1" stop-color="#511725"/></linearGradient></defs><path d="M46,28 C49,29.5 52,31 55.6,32.2 L55.2,33.4 C51.5,33 48.5,32 46.5,31.8 Z" fill="#903044"/><path d="M20,20 C22,22 23.5,24.5 26,25.5 L43,26.3 C46,26.8 48,29 48.6,32 C49,34.5 48.5,36.5 47.6,38.5 L47.2,42 L48,47.8 L45.6,48.4 L45.2,42.5 L44.8,39.2 L43.2,39.2 L42.8,42 L42.4,46 L40.2,46.4 L40.6,42 L40.4,38.2 C37,38.4 33,38.4 30,38 C29,39.5 28.5,41 28.4,43 L28.2,49 L25.8,49.6 L25.6,43.5 L25.4,39.6 L24.6,43.5 L23.8,51 L20.8,51.6 L21.6,44 L21.4,37.5 C19.8,34.5 17.5,29 15,24.5 Z" fill="url(#g43)" stroke="#511725" stroke-width="0.7" stroke-opacity="0.45"/><path d="M30.0,28.5 l1.5,6" stroke="#511725" stroke-width="1.3" opacity="0.18"/><path d="M35.0,28.5 l1.5,6" stroke="#511725" stroke-width="1.3" opacity="0.18"/><path d="M40.0,28.5 l1.5,6" stroke="#511725" stroke-width="1.3" opacity="0.18"/><path d="M26,27.5 C28,21.5 34,20.5 41,23.5 L38,29.0 C34,29.5 30,29.5 26,27.5 Z" fill="#6a3030" opacity="0.85"/><path d="M31,38 C34,34.5 40,34.5 43,38 Z" fill="#9e6473" opacity="0.45"/><path d="M7,21.5 C9,20 12.5,18.8 16,18.3 L20.5,17.2 C22,18.5 22.5,20.5 21.5,23.5 C19.5,24.5 17,25 15,24.8 C12.5,24.2 10,23.6 7,22.8 Z" fill="#9e6473"/><path d="M15,18.4 C17,16.8 19,16.2 21,16.6 L21.6,19.6 C19.5,19.2 17,19 15,18.4 Z" fill="#511725"/><path d="M18,19.5 C21,20 22.5,21.5 21.5,24 C20,24.6 18.5,24.8 17,24.8 Z" fill="#903044" opacity="0.85"/></g><g transform="translate(314.44,457.30)"><defs><linearGradient id="g44" x1="0" y1="20" x2="0" y2="49" gradientUnits="userSpaceOnUse"><stop offset="0" stop-color="#908452"/><stop offset="0.42" stop-color="#908452"/><stop offset="0.72" stop-color="#423425"/><stop offset="1" stop-color="#423425"/></linearGradient></defs><path d="M46,28 C49,29.5 52,31 55.6,32.2 L55.2,33.4 C51.5,33 48.5,32 46.5,31.8 Z" fill="#908452"/><path d="M20,20 C22,22 23.5,24.5 26,25.5 L43,26.3 C46,26.8 48,29 48.6,32 C49,34.5 48.5,36.5 47.6,38.5 L47.2,42 L48,47.8 L45.6,48.4 L45.2,42.5 L44.8,39.2 L43.2,39.2 L42.8,42 L42.4,46 L40.2,46.4 L40.6,42 L40.4,38.2 C37,38.4 33,38.4 30,38 C29,39.5 28.5,41 28.4,43 L28.2,49 L25.8,49.6 L25.6,43.5 L25.4,39.6 L24.6,43.5 L23.8,51 L20.8,51.6 L21.6,44 L21.4,37.5 C19.8,34.5 17.5,29 15,24.5 Z" fill="url(#g44)" stroke="#423425" stroke-width="0.7" stroke-opacity="0.45"/><path d="M30.0,28.5 l1.5,6" stroke="#423425" stroke-width="1.3" opacity="0.18"/><path d="M35.0,28.5 l1.5,6" stroke="#423425" stroke-width="1.3" opacity="0.18"/><path d="M40.0,28.5 l1.5,6" stroke="#423425" stroke-width="1.3" opacity="0.18"/><path d="M27,27.3 L28.8,23.5 L29.6,27.5 Z" fill="#423425"/><path d="M31,27.6 L32.8,23.8 L33.6,27.8 Z" fill="#423425"/><path d="M35,27.900000000000002 L36.8,24.1 L37.6,28.1 Z" fill="#423425"/><path d="M39,28.2 L40.8,24.4 L41.6,28.4 Z" fill="#423425"/><path d="M43,28.5 L44.8,24.7 L45.6,28.7 Z" fill="#423425"/><path d="M31,38 C34,34.5 40,34.5 43,38 Z" fill="#9e9064" opacity="0.45"/><path d="M7,21.5 C9,20 12.5,18.8 16,18.3 L20.5,17.2 C22,18.5 22.5,20.5 21.5,23.5 C19.5,24.5 17,25 15,24.8 C12.5,24.2 10,23.6 7,22.8 Z" fill="#9e9064"/><path d="M15,18.4 C17,16.8 19,16.2 21,16.6 L21.6,19.6 C19.5,19.2 17,19 15,18.4 Z" fill="#423425"/><path d="M18,19.5 C21,20 22.5,21.5 21.5,24 C20,24.6 18.5,24.8 17,24.8 Z" fill="#908452" opacity="0.85"/></g><g transform="translate(389.12,457.30)"><defs><linearGradient id="g45" x1="0" y1="20" x2="0" y2="52" gradientUnits="userSpaceOnUse"><stop offset="0" stop-color="#997f4f"/><stop offset="0.42" stop-color="#997f4f"/><stop offset="0.72" stop-color="#423425"/><stop offset="1" stop-color="#423425"/></linearGradient></defs><path d="M49,30 L53.8,34.2 L50.2,35 Z" fill="#997f4f"/><path d="M18,20.5 C21,22 24,25 28.5,27 L45,28.6 C48.5,29.3 50.5,31.3 50.6,34 C50.6,36 50,37.5 49,39 L48.8,44 L48.6,50.5 L45.8,51 L46,45 L45.4,40.8 L44,40.8 L43.8,47 L43,49.8 L40.4,49.8 L41.2,44 L40.4,39.8 L33.5,39.4 C31.5,39.8 30.8,41 30.4,44 L29,53.5 L24.8,54.4 L25.6,46 L24.6,40.8 C22.5,38 20.5,35 19,31 Z" fill="url(#g45)" stroke="#423425" stroke-width="0.7" stroke-opacity="0.45"/><path d="M30.0,26.5 l1.5,6" stroke="#423425" stroke-width="1.3" opacity="0.18"/><path d="M35.0,26.5 l1.5,6" stroke="#423425" stroke-width="1.3" opacity="0.18"/><path d="M40.0,26.5 l1.5,6" stroke="#423425" stroke-width="1.3" opacity="0.18"/><path d="M31,39.3 C34,35.8 40,35.8 43,39.3 Z" fill="#a58a64" opacity="0.45"/><g transform=""><path d="M9.5,25 C10,23 12.5,21.2 15.5,20.5 L19,20 C21.5,20.5 23,23 23,26 C22.5,29 20.5,31 18,31.2 C15.5,31 13,30 11.5,28.5 C10.2,27.5 9.5,26.3 9.5,25 Z" fill="#997f4f"/><path d="M9.5,25 C10,23 12.5,21.5 15,21.5 C16.5,24 17,27 16.5,30.6 C14.5,30.4 12.5,29.4 11.5,28.5 C10.2,27.5 9.5,26.3 9.5,25 Z" fill="#a58a64"/><path d="M18.2,20.8 L19.4,15.2 L21,19.6 L23.6,16.4 L23,21.8 Z" fill="#423425"/><circle cx="10.3" cy="25.2" r="1" fill="#423425" opacity="0.8"/></g></g></svg>
<div class="a" style="left:394.8px;top:541px;width:234.3px;height:31.7px;border-radius:3.5px;background:linear-gradient(#2c2c2c,#1c1c1c 45%,#101010)"></div>
<svg class="a" style="left:0;top:0" width="1024" height="640" viewBox="0 0 1024 640"><path d="M418,565 L602,565" stroke="#0e0e0e" stroke-width="1.6"/><path d="M407,552.5 L431,552.5" stroke="#161616" stroke-width="1.2"/><path d="M401.2,551 L403,551 L405.5,548.8 L405.5,556 L403,553.8 L401.2,553.8 Z" fill="#e8e8e8"/><path d="M406.2,550.8 C407.2,551.8 407.2,553 406.2,554" stroke="#bbb" stroke-width="0.7" fill="none"/><circle cx="433.8" cy="552.3" r="2.9" fill="#8c8c8c"/><path d="M439,551 L441,551 L444,548.3 L444,556.5 L441,553.8 L439,553.8 Z" fill="#e0e0e0"/><path d="M445,550 C446.5,551.5 446.5,553.5 445,555" stroke="#ccc" stroke-width="0.8" fill="none"/><path d="M446.3,548.6 C448.6,550.8 448.6,554.4 446.3,556.6" stroke="#aaa" stroke-width="0.8" fill="none"/><path d="M481.4,552.5 L488.8,548.4 L488.8,556.6 Z M488.2,552.5 L495.9,548.4 L495.9,556.6 Z" fill="#e6e6e6"/><path d="M510.8,546.3 L523.3,552.6 L510.8,558.9 Z" fill="#e6e6e6"/><path d="M532.8,548.4 L540.3,552.5 L532.8,556.6 Z M539.6,548.4 L547.2,552.5 L539.6,556.6 Z" fill="#e6e6e6"/><path d="M535.5,563 L537.4,564.9 L535.5,566.8 L533.6,564.9 Z" fill="#9a9a9a"/><rect x="593.6" y="551.2" width="7.8" height="3.8" fill="#eaeaea"/><path d="M596.3,550.3 L597.5,548.6 L598.7,550.3 Z M596.3,555.9 L597.5,557.6 L598.7,555.9 Z" fill="#dcdcdc"/><path d="M613.2,550 L613.2,556.3 L620.4,556.3 L620.4,553.8" stroke="#d8d8d8" stroke-width="1.1" fill="none"/><path d="M615,555 C615.5,552 617.5,550.5 619.5,550.5 L619.5,549 L622,551.2 L619.5,553.4 L619.5,552 C618,552 616,553 615,555 Z" fill="#e8e8e8"/></svg>
<div class="a tx" style="left:399.4px;top:561.7px;font-size:6px;line-height:7px;color:#cfcfcf">04:52</div>
<div class="a tx" style="left:605.3px;top:561.7px;font-size:6px;line-height:7px;color:#cfcfcf">-02:49</div>
<div class="panel" style="left:736px;top:48px;width:286.5px;height:536.75px;background:#5a5a5a;border-bottom:1px solid #2a2a2a"></div>
<div class="hdr" style="left:736px;top:48px;width:286.5px;height:11.3px;background:linear-gradient(#4a8458,#2a7a3a 45%,#1e6c2e);color:#f0f8f0;text-shadow:0 0 1px #0a300a">Model View  [Model Info]</div>
<div class="a" style="left:736px;top:59.3px;width:286.5px;height:1px;background:#10300f"></div>
<div class="dot" style="left:1001.3px;top:51.6px"></div><div class="sq" style="left:1012px;top:51.6px"></div>
<div class="a" style="left:738.3px;top:67.8px;width:275.5px;height:275.5px;background:#fffde2;border:1px solid #4a3600;box-shadow:inset 0 0 0 1.5px #fff07c,inset 0 0 2px 2px #fffbb0"></div>
<svg class="a" style="left:0;top:0" width="1024" height="640" viewBox="0 0 1024 640"><defs><linearGradient id="ab" x1="0" y1="120" x2="0" y2="276" gradientUnits="userSpaceOnUse"><stop offset="0" stop-color="#8e9ab0"/><stop offset="0.6" stop-color="#7c8aa4"/><stop offset="0.72" stop-color="#485074"/><stop offset="1" stop-color="#262a48"/></linearGradient><linearGradient id="ah" x1="760" y1="0" x2="830" y2="0" gradientUnits="userSpaceOnUse"><stop offset="0" stop-color="#b4aaa6"/><stop offset="1" stop-color="#a0a4b4"/></linearGradient><linearGradient id="am" x1="0" y1="148" x2="0" y2="172" gradientUnits="userSpaceOnUse"><stop offset="0" stop-color="#2e2e48"/><stop offset="0.5" stop-color="#3c6670"/><stop offset="1" stop-color="#4e8a88"/></linearGradient></defs><path d="M763.4,137 C766,131 776,127 788.6,126.7 L816.8,129.7 L830.2,120.8 L824,140 C835,148 845,156 854,160 L862.9,171 C880,170 900,167 910.4,166 C920,169 927,174 930,180 L933,192 L944.6,201 L934,202.5 C933.5,206 932,209 931.2,211 L935.6,230.7 L930,257 L932.5,263.5 L920.5,264 L923,257 L926.5,233 C920,226 912,221 905,219 L913,231 L911,249 L913,254 L903,254.5 L905,248 L903,231 L899,216 C885,218 876,221 868.8,222 L857,222.5 L855,242 L849,268 L853,276.5 L838,276.5 L843,268 L846.5,242 L846,226 L842,236 L837,256 L840,263.5 L828,264 L832,256 L836,233 L838,219 C830,205 824,192 818,177 C808,172 800,168.5 794.6,167 C785,164 777,161 773.8,158 C769,155 766,150 766.3,144.6 C764,142 763,140 763.4,137 Z" fill="url(#ab)"/><path d="M763.4,137 C766,131 776,127 788.6,126.7 L816,129.5 C822,135 824,145 823,155 C820,165 812,172 806,172 C800,169 796,167.5 794.6,167 C785,164 777,161 773.8,158 C769,155 766,150 766.3,144.6 C764,142 763,140 763.4,137 Z" fill="url(#ah)"/><path d="M794.6,167 C805,170 815,174 818,177 C824,192 830,205 835,219 L843,226 C838,214 832,196 826,182 C818,172 806,168 794.6,167 Z" fill="#c0a098" opacity="0.7"/><path d="M851,222 C856,210 862,200 872,197 C885,194 900,195 910,199 C918,203 924,210 927,222 C920,214 912,212 905,213 L899,216 C885,218 876,221 868.8,222 Z" fill="#c8b49a" opacity="0.7"/><path d="M856,206 C866,198 884,193 904,195 C914,197 921,203 925,210" stroke="#3e4466" stroke-width="2" fill="none" opacity="0.55"/><path d="M844,186 Q848.0,194.0 858,202" stroke="#c9885c" stroke-width="2.6" fill="none" stroke-linecap="round" opacity="0.9"/><path d="M850,178 Q854.0,188.0 864,198" stroke="#c9885c" stroke-width="2.6" fill="none" stroke-linecap="round" opacity="0.9"/><path d="M860,174 Q863.0,184.5 872,195" stroke="#c9885c" stroke-width="2.6" fill="none" stroke-linecap="round" opacity="0.9"/><path d="M870,172 Q872.0,182.5 880,193" stroke="#c9885c" stroke-width="2.6" fill="none" stroke-linecap="round" opacity="0.9"/><path d="M880,170 Q880.5,181.0 887,192" stroke="#c9885c" stroke-width="2.6" fill="none" stroke-linecap="round" opacity="0.9"/><path d="M891,169 Q890.5,180.0 896,191" stroke="#c9885c" stroke-width="2.6" fill="none" stroke-linecap="round" opacity="0.9"/><path d="M901,168 Q899.5,179.5 904,191" stroke="#c9885c" stroke-width="2.6" fill="none" stroke-linecap="round" opacity="0.9"/><path d="M911,169 Q908.0,181.0 911,193" stroke="#c9885c" stroke-width="2.6" fill="none" stroke-linecap="round" opacity="0.9"/><path d="M919,173 Q915.5,185.0 918,197" stroke="#c9885c" stroke-width="2.6" fill="none" stroke-linecap="round" opacity="0.9"/><path d="M926,181 Q922.0,192.0 924,203" stroke="#c9885c" stroke-width="2.6" fill="none" stroke-linecap="round" opacity="0.9"/><path d="M848.5,187 Q852.5,194.0 862.5,201" stroke="#4c5678" stroke-width="1.2" fill="none" opacity="0.45"/><path d="M854.5,179 Q858.5,188.0 868.5,197" stroke="#4c5678" stroke-width="1.2" fill="none" opacity="0.45"/><path d="M864.5,175 Q867.5,184.5 876.5,194" stroke="#4c5678" stroke-width="1.2" fill="none" opacity="0.45"/><path d="M874.5,173 Q876.5,182.5 884.5,192" stroke="#4c5678" stroke-width="1.2" fill="none" opacity="0.45"/><path d="M884.5,171 Q885.0,181.0 891.5,191" stroke="#4c5678" stroke-width="1.2" fill="none" opacity="0.45"/><path d="M895.5,170 Q895.0,180.0 900.5,190" stroke="#4c5678" stroke-width="1.2" fill="none" opacity="0.45"/><path d="M905.5,169 Q904.0,179.5 908.5,190" stroke="#4c5678" stroke-width="1.2" fill="none" opacity="0.45"/><path d="M915.5,170 Q912.5,181.0 915.5,192" stroke="#4c5678" stroke-width="1.2" fill="none" opacity="0.45"/><path d="M923.5,174 Q920.0,185.0 922.5,196" stroke="#4c5678" stroke-width="1.2" fill="none" opacity="0.45"/><path d="M853,147.5 C865,148 876,152 884,155 C895,158 905,162 911,165 L910,169 C896,169 880,171 863,172 C859,165 855,156 853,147.5 Z" fill="url(#am)"/><path d="M857,150.0 l3,10.0 l2,-9.0" stroke="#6aa0a0" stroke-width="0.8" fill="none" opacity="0.6"/><path d="M863,151.6 l3,9.4 l2,-8.4" stroke="#6aa0a0" stroke-width="0.8" fill="none" opacity="0.6"/><path d="M869,153.2 l3,8.8 l2,-7.8" stroke="#6aa0a0" stroke-width="0.8" fill="none" opacity="0.6"/><path d="M875,154.8 l3,8.2 l2,-7.2" stroke="#6aa0a0" stroke-width="0.8" fill="none" opacity="0.6"/><path d="M881,156.4 l3,7.6 l2,-6.6" stroke="#6aa0a0" stroke-width="0.8" fill="none" opacity="0.6"/><path d="M887,158.0 l3,7.0 l2,-6.0" stroke="#6aa0a0" stroke-width="0.8" fill="none" opacity="0.6"/><path d="M893,159.6 l3,6.4 l2,-5.4" stroke="#6aa0a0" stroke-width="0.8" fill="none" opacity="0.6"/><path d="M899,161.2 l3,5.8 l2,-4.8" stroke="#6aa0a0" stroke-width="0.8" fill="none" opacity="0.6"/><path d="M905,162.8 l3,5.2 l2,-4.2" stroke="#6aa0a0" stroke-width="0.8" fill="none" opacity="0.6"/><path d="M778,122.5 C788,116 800,112 810,113 C818,114 821,120 820,128 L815,127 C813,122 808,121 800,122 C792,123 785,124 778,122.5 Z" fill="#5a5468"/><path d="M790,123.0 l2,-7.0" stroke="#c8c0c0" stroke-width="1.1" opacity="0.8"/><path d="M796,122.4 l2,-6.7" stroke="#c8c0c0" stroke-width="1.1" opacity="0.8"/><path d="M802,121.8 l2,-6.4" stroke="#c8c0c0" stroke-width="1.1" opacity="0.8"/><path d="M808,121.2 l2,-6.1" stroke="#c8c0c0" stroke-width="1.1" opacity="0.8"/><path d="M814,120.6 l2,-5.8" stroke="#c8c0c0" stroke-width="1.1" opacity="0.8"/><path d="M818,131 L828,123.5 L823.5,138 Z" fill="#c49a9a"/><path d="M799,131.5 C801,130 804,130 805.5,132 C803,133 801,133 799,131.5 Z" fill="#2a2030"/><path d="M763.4,137 C764,134 767,133 769,135 C768,138 766,140 764,140 Z" fill="#4a3a48"/><path d="M768,154.5 C775,153 783,155 790,157.5" stroke="#2a2030" stroke-width="2.2" fill="none"/><path d="M828,264 l12,0 l-1,-2.5 l-10,0 Z" fill="#c23a58"/><path d="M838,276.5 l15,0 l-1,-2.5 l-13,0 Z" fill="#c23a58"/><path d="M903,254.5 l10,0 l-1,-2.5 l-8,0 Z" fill="#c23a58"/><path d="M920.5,264 l12,0 l-1,-2.5 l-10,0 Z" fill="#c23a58"/><path d="M801.5,179 L801.5,188.5 L803.6,186.6 L805.2,190 L806.4,189.4 L804.8,186 L807.6,186 Z" fill="#fffde8" stroke="#555" stroke-width="0.6"/></svg>
<div class="lbl" style="left:743.8px;top:346.5px;font-size:6.9px;letter-spacing:-0.44px">MODELS/PLANETS/CREATURES/ANTELOPERIG/ANTELOPE.SCENE.MBIN</div>
<div class="btn" style="left:738.6px;top:357.8px;width:191.5px;height:13px;font-size:6.5px;padding-left:5px">View Variants</div>
<div class="a" style="left:740px;top:379.7px;width:272px;height:1px;background:#8a8a8a"></div>
<div class="lbl" style="left:742px;top:384.5px;font-size:6.5px">&#9660; cTkAnimPoseComponentData</div>
<div class="lbl" style="left:742px;top:396px;font-size:6.5px">&#9658; cTkAnimationComponentData</div>
<div class="bar" style="top:407.5px">IDLE</div>
<div class="lbl" style="left:747.8px;top:423.7px;font-size:6.5px">FRAME 259</div>
<div class="lbl" style="left:747.8px;top:435.2px;font-size:6.5px">SPEED</div>
<div class="a" style="left:850px;top:434.6px;width:163.7px;height:9.6px;background:#3c3c3c"></div>
<div class="lbl" style="left:851.5px;top:435.2px;font-size:6px">&#9664;</div>
<div class="lbl" style="left:863px;top:435.2px;font-size:6.5px">1.00000</div>
<div class="lbl" style="left:1006px;top:435.2px;font-size:6px">&#9654;</div>
<div class="bar" style="top:447.70px">SKID</div>
<div class="bar" style="top:463.15px">RIGHT</div>
<div class="bar" style="top:478.60px">LEFT</div>
<div class="bar" style="top:494.05px">EARS</div>
<div class="bar" style="top:509.50px">EAT</div>
<div class="bar" style="top:524.95px">LOOKLEFT</div>
<div class="bar" style="top:540.40px">LOOKRIGHT</div>
<div class="bar" style="top:555.85px">WALK</div>
<div class="bar" style="top:571.30px">RUN</div>
<div class="a" style="left:736px;top:579px;width:286.5px;height:5.75px;background:#5e5e5e;border-bottom:1px solid #2a2a2a"></div>
<div class="a" style="left:1015.5px;top:68px;width:6.5px;height:511px;background:#050505"></div>
<div class="a" style="left:1015.8px;top:68.3px;width:6px;height:342px;background:linear-gradient(90deg,#6a6a6a,#747474);border:1px solid #2c2c2c"></div>
<div class="a" style="left:1019px;top:581px;width:3px;height:3px;background:#999"></div>
</body></html>
